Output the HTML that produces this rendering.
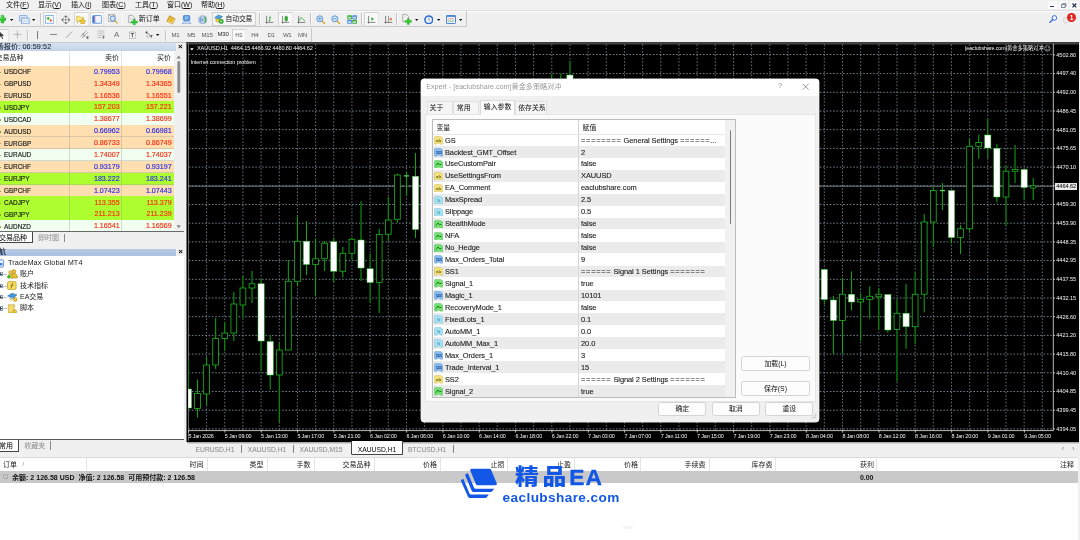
<!DOCTYPE html><html><head><meta charset="utf-8"><title>MT4</title><style>

html,body{margin:0;padding:0;}
body{width:1080px;height:540px;overflow:hidden;background:#f0f0f0;font-family:"Liberation Sans","Noto Sans CJK SC",sans-serif;position:relative;}
#root{position:absolute;left:0;top:0;width:1080px;height:540px;overflow:hidden;background:#f0f0f0;will-change:transform;}
#root div,#root svg{position:absolute;box-sizing:border-box;}
.t{font-family:"Liberation Sans","Noto Sans CJK SC",sans-serif;}
.c{letter-spacing:-0.4px;}
u{text-decoration-thickness:0.5px;text-underline-offset:0.6px;}

</style></head><body><div id="root">
<div style="left:0px;top:0px;width:1080px;height:10.5px;background:#f1f1f1;"></div>
<div class="t" style="top:0.3px;height:9.8px;line-height:9.8px;font-size:7px;color:#111;white-space:nowrap;left:6px;">文件(<u>F</u>)</div>
<div class="t" style="top:0.3px;height:9.8px;line-height:9.8px;font-size:7px;color:#111;white-space:nowrap;left:38px;">显示(<u>V</u>)</div>
<div class="t" style="top:0.3px;height:9.8px;line-height:9.8px;font-size:7px;color:#111;white-space:nowrap;left:71px;">插入(<u>I</u>)</div>
<div class="t" style="top:0.3px;height:9.8px;line-height:9.8px;font-size:7px;color:#111;white-space:nowrap;left:102px;">图表(<u>C</u>)</div>
<div class="t" style="top:0.3px;height:9.8px;line-height:9.8px;font-size:7px;color:#111;white-space:nowrap;left:135px;">工具(<u>T</u>)</div>
<div class="t" style="top:0.3px;height:9.8px;line-height:9.8px;font-size:7px;color:#111;white-space:nowrap;left:167px;">窗口(<u>W</u>)</div>
<div class="t" style="top:0.3px;height:9.8px;line-height:9.8px;font-size:7px;color:#111;white-space:nowrap;left:201px;">帮助(<u>H</u>)</div>
<div style="left:0px;top:10.5px;width:1080px;height:0.8px;background:#fcfcfc;"></div>
<div style="left:0px;top:26.4px;width:466.4px;height:0.8px;background:#c9c9c9;"></div>
<div style="left:466px;top:11.4px;width:0.8px;height:15.6px;background:#c9c9c9;"></div>
<div style="left:0px;top:41.6px;width:311.6px;height:0.8px;background:#c9c9c9;"></div>
<div style="left:311.2px;top:28.4px;width:0.8px;height:13.6px;background:#c9c9c9;"></div>
<svg style="left:-2px;top:15.4px;width:8.2px;height:8.4px" viewBox="0 0 8.2 8.4"><path d="M3.2 0.4 H5.8 V3 H7.8 V5.4 H5.8 V8 H3.2 V5.4 H0 V3 H3.2 Z" fill="#30cc30" stroke="#1a9a1a" stroke-width="0.5"/><path d="M3.8 1 V3.6 H0.4" stroke="#8af08a" stroke-width="0.6" fill="none"/></svg>
<svg style="left:10.0px;top:18.8px;width:3.2px;height:2px" viewBox="0 0 3.2 2"><path d="M0 0 H3.2 L1.6 2 Z" fill="#111"/></svg>
<svg style="left:18.6px;top:14.6px;width:11px;height:9.4px" viewBox="0 0 11 9.4"><rect x="0.5" y="0.5" width="7.6" height="5.6" rx="0.6" fill="#dce8f8" stroke="#6a98d8" stroke-width="0.7"/><rect x="2.4" y="3.2" width="7.8" height="5.6" rx="0.6" fill="#e8f0fb" stroke="#5a8cd2" stroke-width="0.7"/><path d="M1.6 3 L2.8 2 L4 2.8 L5.4 1.8" stroke="#8aa8d8" stroke-width="0.5" fill="none"/><path d="M3.8 7 L5.2 5.8 L6.6 6.6 L8.4 5.4" stroke="#8aa8d8" stroke-width="0.5" fill="none"/></svg>
<svg style="left:31.9px;top:18.8px;width:3.2px;height:2px" viewBox="0 0 3.2 2"><path d="M0 0 H3.2 L1.6 2 Z" fill="#111"/></svg>
<div style="left:39.8px;top:12.6px;width:0.8px;height:12.6px;background:#c4c4c4;"></div><div style="left:40.599999999999994px;top:12.6px;width:0.8px;height:12.6px;background:#fbfbfb;"></div>
<div style="left:42.6px;top:11.8px;width:14.8px;height:14.4px;background:#f9f9f9;border:0.7px solid #d2d2d2;border-right-color:#e6e6e6;border-bottom-color:#ececec;"></div>
<svg style="left:45px;top:15px;width:9.4px;height:9px" viewBox="0 0 9.4 9"><rect x="0.5" y="0.5" width="8.2" height="7.8" fill="#fafcff" stroke="#82b0ea" stroke-width="0.9"/><path d="M1.6 3.4 L3.2 1.8 L4.8 3.4 L3.2 5 Z" fill="#2cb02c"/><path d="M4.2 5.4 L5.8 3.8 L7.4 5.4 L5.8 7 Z" fill="#f07040"/></svg>
<svg style="left:60.8px;top:14.8px;width:9.6px;height:9.6px" viewBox="0 0 9.6 9.6"><path d="M4.8 0.5 L9.1 4.8 L4.8 9.1 L0.5 4.8 Z" fill="#fcfcfc" stroke="#4a4a4a" stroke-width="0.5"/><path d="M4.8 1 V8.6 M1 4.8 H8.6" stroke="#4a4a4a" stroke-width="0.5"/><path d="M3.8 2.2 L4.8 0.8 L5.8 2.2 Z M3.8 7.4 L4.8 8.8 L5.8 7.4 Z M2.2 3.8 L0.8 4.8 L2.2 5.8 Z M7.4 3.8 L8.8 4.8 L7.4 5.8 Z" fill="#3a3a3a"/></svg>
<div style="left:74.4px;top:11.8px;width:15px;height:14.4px;background:#f9f9f9;border:0.7px solid #d2d2d2;border-right-color:#e6e6e6;border-bottom-color:#ececec;"></div>
<svg style="left:76px;top:14.6px;width:10.6px;height:9.6px" viewBox="0 0 10.6 9.6"><path d="M0.5 1.2 H3.2 L4 2.2 H7.4 V6.4 H0.5 Z" fill="#f8e680" stroke="#cca830" stroke-width="0.55"/><path d="M1.6 6.4 V9" stroke="#888" stroke-width="0.5"/><path d="M6.6 3.6 L7.5 5.6 L9.8 5.8 L8.1 7.2 L8.6 9.4 L6.6 8.2 L4.6 9.4 L5.1 7.2 L3.4 5.8 L5.7 5.6 Z" fill="#f8d030" stroke="#b08a10" stroke-width="0.5"/></svg>
<div style="left:90.4px;top:11.8px;width:13.8px;height:14.4px;background:#f9f9f9;border:0.7px solid #d2d2d2;border-right-color:#e6e6e6;border-bottom-color:#ececec;"></div>
<svg style="left:92px;top:15px;width:10.4px;height:9px" viewBox="0 0 10.4 9"><rect x="0.5" y="0.5" width="9.2" height="7.8" rx="0.9" fill="#eef2fd" stroke="#5a96e0" stroke-width="0.9"/><rect x="0.9" y="0.9" width="1.8" height="7" fill="#3a74cc"/><path d="M3.2 1 V8" stroke="#e06060" stroke-width="0.4"/></svg>
<svg style="left:108px;top:14.4px;width:10.6px;height:10.4px" viewBox="0 0 10.6 10.4"><rect x="0.6" y="0.8" width="6.4" height="6.6" fill="#f0f0f0" stroke="#999" stroke-width="0.6"/><path d="M1.6 0.8 V2 M6 0.8 V2" stroke="#666" stroke-width="0.6"/><circle cx="4.8" cy="4.6" r="2.6" fill="#cfe2f8" stroke="#4a7ac0" stroke-width="0.8"/><path d="M6.8 6.6 L9.6 9.4" stroke="#d8a020" stroke-width="1.3"/></svg>
<div style="left:121.6px;top:12.6px;width:0.8px;height:12.6px;background:#c4c4c4;"></div><div style="left:122.39999999999999px;top:12.6px;width:0.8px;height:12.6px;background:#fbfbfb;"></div>
<svg style="left:127.8px;top:14.6px;width:10px;height:10.4px" viewBox="0 0 10 10.4"><path d="M0.8 0.6 H4.6 L6.4 2.4 V7.6 H0.8 Z" fill="#fafafa" stroke="#777" stroke-width="0.6"/><path d="M2 3 H5 M2 4.4 H5" stroke="#aaa" stroke-width="0.5"/><path d="M5.4 4.2 H7.2 V6.2 H9.4 V8 H7.2 V10.2 H5.4 V8 H3.2 V6.2 H5.4 Z" fill="#30cc30" stroke="#1a9a1a" stroke-width="0.45"/></svg>
<div class="t" style="top:13.9px;height:9.8px;line-height:9.8px;font-size:7px;color:#111;white-space:nowrap;left:138.8px;">新订单</div>
<svg style="left:165.6px;top:14.6px;width:10px;height:10px" viewBox="0 0 10 10"><path d="M3.6 0.8 L9.2 4 L6.2 9 L0.8 6.2 Z" fill="#e8b830" stroke="#a87810" stroke-width="0.6"/><path d="M2 6.4 L5.8 8.4 L8.2 4.4" fill="none" stroke="#fae8a0" stroke-width="0.8"/></svg>
<svg style="left:182px;top:14.6px;width:9.6px;height:9.8px" viewBox="0 0 9.6 9.8"><rect x="1.4" y="0.6" width="6.4" height="5" rx="0.8" fill="#5aa0e8" stroke="#2a68b8" stroke-width="0.6"/><path d="M3 2 H6.4 M3 3.4 H5.4" stroke="#e6f0fc" stroke-width="0.6"/><path d="M0.5 9 Q0.5 6.2 4.6 6.2 Q8.8 6.2 8.8 9 Z" fill="#c8dcf4" stroke="#6a90c8" stroke-width="0.6"/></svg>
<svg style="left:197.8px;top:14.8px;width:9.6px;height:9.6px" viewBox="0 0 9.6 9.6"><circle cx="4.8" cy="4.8" r="4.1" fill="#b8d0ec" stroke="#7a9cc8" stroke-width="0.6"/><path d="M2.8 2.4 Q1.4 4.8 2.8 7.2" fill="none" stroke="#4a78c0" stroke-width="0.7"/><circle cx="4.4" cy="4.8" r="0.8" fill="#3a68b0"/><path d="M6 2 Q8 4.8 6 7.6 Q7.6 8.4 8.2 6 Q8.8 3.6 7.4 1.8 Z" fill="#48b048"/></svg>
<div style="left:212.2px;top:11.8px;width:43.4px;height:14.4px;background:#f6f6f6;border:0.7px solid #d0d0d0;"></div>
<svg style="left:214.2px;top:14.4px;width:9.8px;height:10px" viewBox="0 0 9.8 10"><path d="M0.6 3.6 L4.4 1 L8.6 2.6 L5 5.2 Z" fill="#4aa4e0" stroke="#2068a8" stroke-width="0.5"/><path d="M1.8 4.6 V7 Q4 9.2 6.6 7.4 V4.4 L5 5.6 Z" fill="#f0d050" stroke="#a88a18" stroke-width="0.5"/><circle cx="7.2" cy="7.4" r="2.2" fill="#28b828" stroke="#128012" stroke-width="0.4"/><path d="M6.5 6.3 L8.3 7.4 L6.5 8.5 Z" fill="#fff"/></svg>
<div class="t" style="top:14.04px;height:9.52px;line-height:9.52px;font-size:6.8px;color:#111;white-space:nowrap;left:225.6px;letter-spacing:-0.15px;">自动交易</div>
<div style="left:259px;top:12.6px;width:0.8px;height:12.6px;background:#c4c4c4;"></div><div style="left:259.8px;top:12.6px;width:0.8px;height:12.6px;background:#fbfbfb;"></div>
<svg style="left:265.4px;top:14.8px;width:9px;height:9.6px" viewBox="0 0 9 9.6"><path d="M1.6 0.8 V8.6 M0.4 7.4 H8.4" stroke="#555" stroke-width="0.7" fill="none"/><path d="M4.8 1.6 V6.4 M4.8 2.4 H6.2 M3.6 5.4 H4.8" stroke="#28a028" stroke-width="0.8" fill="none"/></svg>
<div style="left:278px;top:11.8px;width:14.6px;height:14.4px;background:#f9f9f9;border:0.7px solid #d2d2d2;border-right-color:#e6e6e6;border-bottom-color:#ececec;"></div>
<svg style="left:281.4px;top:14.6px;width:9px;height:9.8px" viewBox="0 0 9 9.8"><path d="M1.6 0.8 V8.6 M0.4 7.4 H8.4" stroke="#555" stroke-width="0.7" fill="none"/><path d="M5.2 0.6 V7" stroke="#187818" stroke-width="0.6"/><rect x="4" y="1.8" width="2.4" height="3.8" fill="#30c030" stroke="#187818" stroke-width="0.5"/></svg>
<svg style="left:297.4px;top:14.8px;width:9px;height:9.6px" viewBox="0 0 9 9.6"><path d="M1.6 0.8 V8.6 M0.4 7.4 H8.4" stroke="#555" stroke-width="0.7" fill="none"/><path d="M1.6 6.6 L4 2.4 L6 4.2 L8 6" stroke="#38a838" stroke-width="0.8" fill="none"/></svg>
<div style="left:310.2px;top:12.6px;width:0.8px;height:12.6px;background:#c4c4c4;"></div><div style="left:311.0px;top:12.6px;width:0.8px;height:12.6px;background:#fbfbfb;"></div>
<svg style="left:315.6px;top:14.8px;width:10px;height:10px" viewBox="0 0 10 10"><circle cx="3.8" cy="3.8" r="3" fill="#d4e8fa" stroke="#4a8ad0" stroke-width="0.9"/><path d="M6 6 L9 9" stroke="#d8a828" stroke-width="1.4"/><path d="M2.2 3.8 H5.4" stroke="#4a8ad0" stroke-width="0.8"/><path d="M3.8 2.2 V5.4" stroke="#4a8ad0" stroke-width="0.8"/></svg>
<svg style="left:331px;top:14.8px;width:10px;height:10px" viewBox="0 0 10 10"><circle cx="3.8" cy="3.8" r="3" fill="#d4e8fa" stroke="#4a8ad0" stroke-width="0.9"/><path d="M6 6 L9 9" stroke="#d8a828" stroke-width="1.4"/><path d="M2.2 3.8 H5.4" stroke="#4a8ad0" stroke-width="0.8"/></svg>
<svg style="left:346.8px;top:14.8px;width:10.2px;height:9.4px" viewBox="0 0 10.2 9.4"><rect x="0.3" y="0.3" width="4.6" height="4" rx="0.5" fill="#38a838"/><rect x="5.3" y="0.3" width="4.6" height="4" rx="0.5" fill="#4a88d8"/><rect x="0.3" y="4.8" width="4.6" height="4" rx="0.5" fill="#4a88d8"/><rect x="5.3" y="4.8" width="4.6" height="4" rx="0.5" fill="#38a838"/><g fill="#fff" opacity="0.8"><rect x="1.2" y="1.8" width="2.8" height="1.6"/><rect x="6.2" y="1.8" width="2.8" height="1.6"/><rect x="1.2" y="6.3" width="2.8" height="1.6"/><rect x="6.2" y="6.3" width="2.8" height="1.6"/></g></svg>
<div style="left:360.8px;top:12.6px;width:0.8px;height:12.6px;background:#c4c4c4;"></div><div style="left:361.6px;top:12.6px;width:0.8px;height:12.6px;background:#fbfbfb;"></div>
<div style="left:364.4px;top:11.8px;width:14.4px;height:14.4px;background:#f9f9f9;border:0.7px solid #d2d2d2;border-right-color:#e6e6e6;border-bottom-color:#ececec;"></div>
<svg style="left:367.4px;top:14.8px;width:9px;height:9.6px" viewBox="0 0 9 9.6"><path d="M1.6 0.8 V8.6 M0.4 7.4 H8.4" stroke="#555" stroke-width="0.7" fill="none"/><path d="M4.4 2 L7 4 L4.4 6 Z" fill="#30b030"/></svg>
<svg style="left:383.6px;top:14.8px;width:9px;height:9.6px" viewBox="0 0 9 9.6"><path d="M1.6 0.8 V8.6 M0.4 7.4 H8.4" stroke="#555" stroke-width="0.7" fill="none"/><path d="M4.6 1 V7.4" stroke="#555" stroke-width="0.6"/><path d="M7.6 2.6 L5.4 4.2 L7.6 5.8 Z" fill="#e05828"/></svg>
<div style="left:396.4px;top:12.6px;width:0.8px;height:12.6px;background:#c4c4c4;"></div><div style="left:397.2px;top:12.6px;width:0.8px;height:12.6px;background:#fbfbfb;"></div>
<svg style="left:402.4px;top:14.2px;width:10px;height:10.6px" viewBox="0 0 10 10.6"><path d="M0.8 0.6 H4.6 L6.4 2.4 V7.6 H0.8 Z" fill="#fafafa" stroke="#777" stroke-width="0.6"/><path d="M2 3.6 L3.2 2.6 L4.4 3.8" stroke="#999" stroke-width="0.5" fill="none"/><path d="M5.4 4.4 H7.2 V6.4 H9.4 V8.2 H7.2 V10.4 H5.4 V8.2 H3.2 V6.4 H5.4 Z" fill="#30cc30" stroke="#1a9a1a" stroke-width="0.45"/></svg>
<svg style="left:414.6px;top:18.7px;width:3.2px;height:2px" viewBox="0 0 3.2 2"><path d="M0 0 H3.2 L1.6 2 Z" fill="#111"/></svg>
<svg style="left:423.6px;top:14.8px;width:9.6px;height:9.6px" viewBox="0 0 9.6 9.6"><circle cx="4.8" cy="4.8" r="3.9" fill="#e8eef8" stroke="#2a6ad0" stroke-width="1.5"/><path d="M4.8 2.8 V4.8 L6 5.6" stroke="#667" stroke-width="0.6" fill="none"/></svg>
<svg style="left:436.8px;top:18.7px;width:3.2px;height:2px" viewBox="0 0 3.2 2"><path d="M0 0 H3.2 L1.6 2 Z" fill="#111"/></svg>
<svg style="left:446px;top:15px;width:10px;height:9.2px" viewBox="0 0 10 9.2"><rect x="0.5" y="0.5" width="9" height="8" rx="0.6" fill="#eef4fc" stroke="#3c7cd0" stroke-width="0.9"/><path d="M0.5 1.2 H9.5" stroke="#3c7cd0" stroke-width="1.2"/><path d="M1.6 5 L3.6 3.4 L5.4 4.4 L8.2 2.8" stroke="#e06030" stroke-width="0.6" fill="none"/><path d="M1.6 7 L3.6 5.8 L5.4 6.6 L8.2 5.4" stroke="#38a838" stroke-width="0.6" fill="none"/></svg>
<svg style="left:458.8px;top:18.7px;width:3.2px;height:2px" viewBox="0 0 3.2 2"><path d="M0 0 H3.2 L1.6 2 Z" fill="#111"/></svg>
<div style="left:0px;top:28.6px;width:8.8px;height:13px;background:#f8f8f8;border-top:0.7px solid #d0d0d0;border-right:0.7px solid #e2e2e2;"></div>
<svg style="left:-1px;top:30.6px;width:5.4px;height:8.4px" viewBox="0 0 5.4 8.4"><path d="M0.4 0.4 V6.6 L2 5.2 L3.2 8 L4.2 7.6 L3 4.9 L5 4.7 Z" fill="#3a3a3a"/></svg>
<svg style="left:13.4px;top:30.4px;width:8.8px;height:8.8px" viewBox="0 0 8.8 8.8"><path d="M4.4 0.4 V8.4 M0.4 4.4 H8.4" stroke="#9a9a9a" stroke-width="0.65"/></svg>
<div style="left:27px;top:29.6px;width:0.8px;height:11.2px;background:#c4c4c4;"></div><div style="left:27.8px;top:29.6px;width:0.8px;height:11.2px;background:#fbfbfb;"></div>
<div style="left:36.9px;top:31px;width:0.65px;height:7.6px;background:#7c7c7c;"></div>
<div style="left:50px;top:34.35px;width:7px;height:0.65px;background:#868686;"></div>
<svg style="left:65.4px;top:30.6px;width:7.4px;height:7.8px" viewBox="0 0 7.4 7.8"><path d="M0.4 7.4 L7 0.6" stroke="#7c7c7c" stroke-width="0.65"/></svg>
<svg style="left:80.4px;top:30.2px;width:9px;height:9.4px" viewBox="0 0 9 9.4"><path d="M0.6 6.4 L6.4 0.8 M2 8 L7.8 2.4 M2.6 3 L4.8 6.8" stroke="#666" stroke-width="0.6" fill="none"/><text x="6.4" y="9.2" font-size="3.4" font-weight="bold" fill="#333" font-family="Liberation Sans,sans-serif">E</text></svg>
<svg style="left:97px;top:30.4px;width:8.4px;height:9px" viewBox="0 0 8.4 9"><path d="M0.4 1 H7.6 M0.4 3.2 H7.6 M0.4 5.4 H7.6 M0.4 7.6 H5.4" stroke="#9a9a9a" stroke-width="0.55"/><text x="5.8" y="9" font-size="3" font-weight="bold" fill="#333" font-family="Liberation Sans,sans-serif">F</text></svg>
<div class="t" style="top:30.24px;height:10.92px;line-height:10.92px;font-size:7.8px;color:#6a6a6a;white-space:nowrap;left:111.6px;width:10px;text-align:center;">A</div>
<svg style="left:129.2px;top:30.6px;width:6.8px;height:8.2px" viewBox="0 0 6.8 8.2"><rect x="0.5" y="1" width="5.8" height="6.6" fill="#f8f8f8" stroke="#777" stroke-width="0.6" stroke-dasharray="1 0.5"/><path d="M1.8 2.6 H5 M3.4 2.6 V6.4" stroke="#333" stroke-width="0.8"/></svg>
<svg style="left:145px;top:31px;width:7.8px;height:7.6px" viewBox="0 0 7.8 7.6"><path d="M0.6 1.4 L2 0.4 L2 2.4 Z M2 1.4 L5.4 4.8 M4 4.4 L6.6 7 M6 4.6 L7.2 4.2 L6.4 6 Z" fill="#444" stroke="#444" stroke-width="0.6"/><path d="M1.2 4.6 L3.4 6.8" stroke="#444" stroke-width="0.6"/></svg>
<svg style="left:156.3px;top:33.9px;width:3.2px;height:2px" viewBox="0 0 3.2 2"><path d="M0 0 H3.2 L1.6 2 Z" fill="#111"/></svg>
<div style="left:165.2px;top:29.6px;width:0.8px;height:11.2px;background:#c4c4c4;"></div><div style="left:166.0px;top:29.6px;width:0.8px;height:11.2px;background:#fbfbfb;"></div>
<div class="t" style="top:30.53px;height:8.54px;line-height:8.54px;font-size:6.1px;color:#5a5a5a;white-space:nowrap;left:165.4px;width:20px;text-align:center;letter-spacing:-0.3px;">M1</div>
<div class="t" style="top:30.53px;height:8.54px;line-height:8.54px;font-size:6.1px;color:#5a5a5a;white-space:nowrap;left:181.2px;width:20px;text-align:center;letter-spacing:-0.3px;">M5</div>
<div class="t" style="top:30.53px;height:8.54px;line-height:8.54px;font-size:6.1px;color:#5a5a5a;white-space:nowrap;left:197.0px;width:20px;text-align:center;letter-spacing:-0.3px;">M15</div>
<div style="left:216.2px;top:28.4px;width:14.4px;height:12.8px;background:#f6f6f6;border:0.5px solid #ebebeb;"></div>
<div class="t" style="top:29.93px;height:8.54px;line-height:8.54px;font-size:6.1px;color:#2a2a2a;white-space:nowrap;left:213.0px;width:20px;text-align:center;letter-spacing:-0.3px;">M30</div>
<div style="left:232.4px;top:28.6px;width:13.4px;height:12.6px;background:#f9f9f9;border:0.6px solid #ececec;border-top-color:#d4d4d4;border-left-color:#d0d0d0;"></div>
<div class="t" style="top:30.53px;height:8.54px;line-height:8.54px;font-size:6.1px;color:#5a5a5a;white-space:nowrap;left:228.8px;width:20px;text-align:center;letter-spacing:-0.3px;">H1</div>
<div class="t" style="top:30.53px;height:8.54px;line-height:8.54px;font-size:6.1px;color:#5a5a5a;white-space:nowrap;left:244.8px;width:20px;text-align:center;letter-spacing:-0.3px;">H4</div>
<div class="t" style="top:30.53px;height:8.54px;line-height:8.54px;font-size:6.1px;color:#5a5a5a;white-space:nowrap;left:261.0px;width:20px;text-align:center;letter-spacing:-0.3px;">D1</div>
<div class="t" style="top:30.53px;height:8.54px;line-height:8.54px;font-size:6.1px;color:#5a5a5a;white-space:nowrap;left:277.2px;width:20px;text-align:center;letter-spacing:-0.3px;">W1</div>
<div class="t" style="top:30.53px;height:8.54px;line-height:8.54px;font-size:6.1px;color:#5a5a5a;white-space:nowrap;left:292.5px;width:20px;text-align:center;letter-spacing:-0.3px;">MN</div>
<div style="left:1048px;top:1px;width:9px;height:8.2px;background:#fbfbfb;"></div>
<div style="left:1059px;top:1px;width:9px;height:8.2px;background:#fbfbfb;"></div>
<div style="left:1070px;top:1px;width:9px;height:8.2px;background:#fbfbfb;"></div>
<div style="left:1050.4px;top:6px;width:3.4px;height:1.0px;background:#2c3a54;"></div>
<svg style="left:1061px;top:3px;width:5.6px;height:5px" viewBox="0 0 5.6 5"><path d="M1.6 1.6 V0.5 H5.1 V3.2 H4" stroke="#4c5a74" stroke-width="0.6" fill="none"/><rect x="0.5" y="1.7" width="3.6" height="2.8" stroke="#4c5a74" stroke-width="0.7" fill="none"/></svg>
<svg style="left:1072.2px;top:3px;width:4.8px;height:4.8px" viewBox="0 0 4.8 4.8"><path d="M0.5 0.5 L4.3 4.3 M4.3 0.5 L0.5 4.3" stroke="#1c2a44" stroke-width="1.1"/></svg>
<div style="left:0px;top:10.2px;width:1080px;height:1.2px;background:#dedede;"></div>
<svg style="left:1049px;top:14.8px;width:8.4px;height:8px" viewBox="0 0 8.4 8"><circle cx="5.4" cy="2.9" r="2.3" fill="#f4f8ff" stroke="#2a5ed0" stroke-width="0.9"/><path d="M3.8 4.6 L0.8 7.4" stroke="#2a5ed0" stroke-width="1.3" stroke-linecap="round"/></svg>
<svg style="left:1063px;top:17px;width:8px;height:8px" viewBox="0 0 8 8"><path d="M0.6 1.4 Q0.6 0.6 1.6 0.6 H6 Q7 0.6 7 1.4 V4.4 Q7 5.2 6 5.2 H3.4 L1.8 6.8 V5.2 Q0.6 5.2 0.6 4.4 Z" fill="#ececec" stroke="#c4c4c4" stroke-width="0.5"/></svg>
<div style="left:1067px;top:13.2px;width:9.2px;height:9.2px;background:#e0261c;border-radius:50%;"></div>
<div class="t" style="top:13.28px;height:9.24px;line-height:9.24px;font-size:6.6px;color:#fff;white-space:nowrap;left:1067.6px;width:8px;text-align:center;font-weight:bold;">1</div>

<div style="left:0px;top:42.8px;width:183.5px;height:201px;background:#f0f0f0;"></div>
<div style="left:0px;top:43.2px;width:176px;height:8px;background:linear-gradient(#d6e2f1,#c3d3e8);"></div>
<div class="t" style="top:42.26px;height:10.08px;line-height:10.08px;font-size:7.2px;color:#18243c;white-space:nowrap;left:-3.6px;letter-spacing:0.1px;-webkit-text-stroke:0.1px #18243c;">场报价: 06:59:52</div>
<div class="t" style="top:41.2px;height:11.2px;line-height:11.2px;font-size:8px;color:#000;white-space:nowrap;left:175.4px;width:10px;text-align:center;font-weight:bold;">×</div>
<div style="left:0px;top:51px;width:174px;height:14.5px;background:#ffffff;"></div>
<div style="left:174px;top:51px;width:9.5px;height:181px;background:#f0f0f0;"></div>
<div class="t" style="top:53.4px;height:9.8px;line-height:9.8px;font-size:7px;color:#222;white-space:nowrap;left:-4.5px;">交易品种</div>
<div class="t" style="top:53.4px;height:9.8px;line-height:9.8px;font-size:7px;color:#222;white-space:nowrap;right:961.1px;text-align:right;">卖价</div>
<div class="t" style="top:53.4px;height:9.8px;line-height:9.8px;font-size:7px;color:#222;white-space:nowrap;right:909.1px;text-align:right;">买价</div>
<div style="left:69.3px;top:51px;width:0.8px;height:14.5px;background:#e2e2e2;"></div>
<div style="left:121.3px;top:51px;width:0.8px;height:14.5px;background:#e2e2e2;"></div>
<div style="left:0px;top:65.6px;width:174px;height:11.99px;background:#ffdfb0;"></div>
<div style="left:0px;top:76.99px;width:174px;height:0.6px;background:rgba(150,150,150,0.35);"></div>
<div style="left:69.3px;top:65.6px;width:0.7px;height:11.89px;background:rgba(150,150,150,0.35);"></div>
<div style="left:121.3px;top:65.6px;width:0.7px;height:11.89px;background:rgba(150,150,150,0.35);"></div>
<div style="left:0px;top:71.79px;width:1.1px;height:1.3px;background:#3a9a3a;border-radius:1px;"></div>
<div class="t" style="top:67.18px;height:10.22px;line-height:10.22px;font-size:7.3px;color:#1c1c1c;white-space:nowrap;left:3.9px;transform:scaleX(0.885);transform-origin:0 50%;-webkit-text-stroke:0.18px #1c1c1c;">USDCHF</div>
<div class="t" style="top:67.72px;height:9.94px;line-height:9.94px;font-size:7.1px;color:#2a2ae8;white-space:nowrap;right:960.4px;text-align:right;-webkit-text-stroke:0.15px #2a2ae8;">0.79953</div>
<div class="t" style="top:67.72px;height:9.94px;line-height:9.94px;font-size:7.1px;color:#2a2ae8;white-space:nowrap;right:908.4px;text-align:right;-webkit-text-stroke:0.15px #2a2ae8;">0.79968</div>
<div style="left:0px;top:77.49px;width:174px;height:11.99px;background:#ffdfb0;"></div>
<div style="left:0px;top:88.88px;width:174px;height:0.6px;background:rgba(150,150,150,0.35);"></div>
<div style="left:69.3px;top:77.49px;width:0.7px;height:11.89px;background:rgba(150,150,150,0.35);"></div>
<div style="left:121.3px;top:77.49px;width:0.7px;height:11.89px;background:rgba(150,150,150,0.35);"></div>
<div style="left:0px;top:83.69px;width:1.1px;height:1.3px;background:#b08a20;border-radius:1px;"></div>
<div class="t" style="top:79.08px;height:10.22px;line-height:10.22px;font-size:7.3px;color:#1c1c1c;white-space:nowrap;left:3.9px;transform:scaleX(0.885);transform-origin:0 50%;-webkit-text-stroke:0.18px #1c1c1c;">GBPUSD</div>
<div class="t" style="top:79.62px;height:9.94px;line-height:9.94px;font-size:7.1px;color:#ff2a10;white-space:nowrap;right:960.4px;text-align:right;-webkit-text-stroke:0.15px #ff2a10;">1.34349</div>
<div class="t" style="top:79.62px;height:9.94px;line-height:9.94px;font-size:7.1px;color:#ff2a10;white-space:nowrap;right:908.4px;text-align:right;-webkit-text-stroke:0.15px #ff2a10;">1.34365</div>
<div style="left:0px;top:89.38px;width:174px;height:11.99px;background:#ffdfb0;"></div>
<div style="left:0px;top:100.77px;width:174px;height:0.6px;background:rgba(150,150,150,0.35);"></div>
<div style="left:69.3px;top:89.38px;width:0.7px;height:11.89px;background:rgba(150,150,150,0.35);"></div>
<div style="left:121.3px;top:89.38px;width:0.7px;height:11.89px;background:rgba(150,150,150,0.35);"></div>
<div style="left:0px;top:95.57px;width:1.1px;height:1.3px;background:#b08a20;border-radius:1px;"></div>
<div class="t" style="top:90.96px;height:10.22px;line-height:10.22px;font-size:7.3px;color:#1c1c1c;white-space:nowrap;left:3.9px;transform:scaleX(0.885);transform-origin:0 50%;-webkit-text-stroke:0.18px #1c1c1c;">EURUSD</div>
<div class="t" style="top:91.5px;height:9.94px;line-height:9.94px;font-size:7.1px;color:#ff2a10;white-space:nowrap;right:960.4px;text-align:right;-webkit-text-stroke:0.15px #ff2a10;">1.16536</div>
<div class="t" style="top:91.5px;height:9.94px;line-height:9.94px;font-size:7.1px;color:#ff2a10;white-space:nowrap;right:908.4px;text-align:right;-webkit-text-stroke:0.15px #ff2a10;">1.16551</div>
<div style="left:0px;top:101.27px;width:174px;height:11.99px;background:#adff2f;"></div>
<div style="left:0px;top:112.66px;width:174px;height:0.6px;background:rgba(150,150,150,0.35);"></div>
<div style="left:69.3px;top:101.27px;width:0.7px;height:11.89px;background:rgba(150,150,150,0.35);"></div>
<div style="left:121.3px;top:101.27px;width:0.7px;height:11.89px;background:rgba(150,150,150,0.35);"></div>
<div style="left:0px;top:107.47px;width:1.1px;height:1.3px;background:#b08a20;border-radius:1px;"></div>
<div class="t" style="top:102.86px;height:10.22px;line-height:10.22px;font-size:7.3px;color:#1c1c1c;white-space:nowrap;left:3.9px;transform:scaleX(0.885);transform-origin:0 50%;-webkit-text-stroke:0.18px #1c1c1c;">USDJPY</div>
<div class="t" style="top:103.4px;height:9.94px;line-height:9.94px;font-size:7.1px;color:#ff2a10;white-space:nowrap;right:960.4px;text-align:right;-webkit-text-stroke:0.15px #ff2a10;">157.203</div>
<div class="t" style="top:103.4px;height:9.94px;line-height:9.94px;font-size:7.1px;color:#ff2a10;white-space:nowrap;right:908.4px;text-align:right;-webkit-text-stroke:0.15px #ff2a10;">157.221</div>
<div style="left:0px;top:113.16px;width:174px;height:11.99px;background:#f0fff0;"></div>
<div style="left:0px;top:124.55px;width:174px;height:0.6px;background:rgba(150,150,150,0.35);"></div>
<div style="left:69.3px;top:113.16px;width:0.7px;height:11.89px;background:rgba(150,150,150,0.35);"></div>
<div style="left:121.3px;top:113.16px;width:0.7px;height:11.89px;background:rgba(150,150,150,0.35);"></div>
<div style="left:0px;top:119.35px;width:1.1px;height:1.3px;background:#b08a20;border-radius:1px;"></div>
<div class="t" style="top:114.74px;height:10.22px;line-height:10.22px;font-size:7.3px;color:#1c1c1c;white-space:nowrap;left:3.9px;transform:scaleX(0.885);transform-origin:0 50%;-webkit-text-stroke:0.18px #1c1c1c;">USDCAD</div>
<div class="t" style="top:115.28px;height:9.94px;line-height:9.94px;font-size:7.1px;color:#ff2a10;white-space:nowrap;right:960.4px;text-align:right;-webkit-text-stroke:0.15px #ff2a10;">1.38677</div>
<div class="t" style="top:115.28px;height:9.94px;line-height:9.94px;font-size:7.1px;color:#ff2a10;white-space:nowrap;right:908.4px;text-align:right;-webkit-text-stroke:0.15px #ff2a10;">1.38699</div>
<div style="left:0px;top:125.05px;width:174px;height:11.99px;background:#ffdfb0;"></div>
<div style="left:0px;top:136.44px;width:174px;height:0.6px;background:rgba(150,150,150,0.35);"></div>
<div style="left:69.3px;top:125.05px;width:0.7px;height:11.89px;background:rgba(150,150,150,0.35);"></div>
<div style="left:121.3px;top:125.05px;width:0.7px;height:11.89px;background:rgba(150,150,150,0.35);"></div>
<div style="left:0px;top:131.25px;width:1.1px;height:1.3px;background:#3a9a3a;border-radius:1px;"></div>
<div class="t" style="top:126.64px;height:10.22px;line-height:10.22px;font-size:7.3px;color:#1c1c1c;white-space:nowrap;left:3.9px;transform:scaleX(0.885);transform-origin:0 50%;-webkit-text-stroke:0.18px #1c1c1c;">AUDUSD</div>
<div class="t" style="top:127.18px;height:9.94px;line-height:9.94px;font-size:7.1px;color:#2a2ae8;white-space:nowrap;right:960.4px;text-align:right;-webkit-text-stroke:0.15px #2a2ae8;">0.66962</div>
<div class="t" style="top:127.18px;height:9.94px;line-height:9.94px;font-size:7.1px;color:#2a2ae8;white-space:nowrap;right:908.4px;text-align:right;-webkit-text-stroke:0.15px #2a2ae8;">0.66981</div>
<div style="left:0px;top:136.94px;width:174px;height:11.99px;background:#ffdfb0;"></div>
<div style="left:0px;top:148.33px;width:174px;height:0.6px;background:rgba(150,150,150,0.35);"></div>
<div style="left:69.3px;top:136.94px;width:0.7px;height:11.89px;background:rgba(150,150,150,0.35);"></div>
<div style="left:121.3px;top:136.94px;width:0.7px;height:11.89px;background:rgba(150,150,150,0.35);"></div>
<div style="left:0px;top:143.13px;width:1.1px;height:1.3px;background:#b08a20;border-radius:1px;"></div>
<div class="t" style="top:138.52px;height:10.22px;line-height:10.22px;font-size:7.3px;color:#1c1c1c;white-space:nowrap;left:3.9px;transform:scaleX(0.885);transform-origin:0 50%;-webkit-text-stroke:0.18px #1c1c1c;">EURGBP</div>
<div class="t" style="top:139.06px;height:9.94px;line-height:9.94px;font-size:7.1px;color:#ff2a10;white-space:nowrap;right:960.4px;text-align:right;-webkit-text-stroke:0.15px #ff2a10;">0.86733</div>
<div class="t" style="top:139.06px;height:9.94px;line-height:9.94px;font-size:7.1px;color:#ff2a10;white-space:nowrap;right:908.4px;text-align:right;-webkit-text-stroke:0.15px #ff2a10;">0.86749</div>
<div style="left:0px;top:148.83px;width:174px;height:11.99px;background:#f0fff0;"></div>
<div style="left:0px;top:160.22px;width:174px;height:0.6px;background:rgba(150,150,150,0.35);"></div>
<div style="left:69.3px;top:148.83px;width:0.7px;height:11.89px;background:rgba(150,150,150,0.35);"></div>
<div style="left:121.3px;top:148.83px;width:0.7px;height:11.89px;background:rgba(150,150,150,0.35);"></div>
<div style="left:0px;top:155.03px;width:1.1px;height:1.3px;background:#b08a20;border-radius:1px;"></div>
<div class="t" style="top:150.42px;height:10.22px;line-height:10.22px;font-size:7.3px;color:#1c1c1c;white-space:nowrap;left:3.9px;transform:scaleX(0.885);transform-origin:0 50%;-webkit-text-stroke:0.18px #1c1c1c;">EURAUD</div>
<div class="t" style="top:150.96px;height:9.94px;line-height:9.94px;font-size:7.1px;color:#ff2a10;white-space:nowrap;right:960.4px;text-align:right;-webkit-text-stroke:0.15px #ff2a10;">1.74007</div>
<div class="t" style="top:150.96px;height:9.94px;line-height:9.94px;font-size:7.1px;color:#ff2a10;white-space:nowrap;right:908.4px;text-align:right;-webkit-text-stroke:0.15px #ff2a10;">1.74037</div>
<div style="left:0px;top:160.72px;width:174px;height:11.99px;background:#ffdfb0;"></div>
<div style="left:0px;top:172.11px;width:174px;height:0.6px;background:rgba(150,150,150,0.35);"></div>
<div style="left:69.3px;top:160.72px;width:0.7px;height:11.89px;background:rgba(150,150,150,0.35);"></div>
<div style="left:121.3px;top:160.72px;width:0.7px;height:11.89px;background:rgba(150,150,150,0.35);"></div>
<div style="left:0px;top:166.91px;width:1.1px;height:1.3px;background:#3a9a3a;border-radius:1px;"></div>
<div class="t" style="top:162.3px;height:10.22px;line-height:10.22px;font-size:7.3px;color:#1c1c1c;white-space:nowrap;left:3.9px;transform:scaleX(0.885);transform-origin:0 50%;-webkit-text-stroke:0.18px #1c1c1c;">EURCHF</div>
<div class="t" style="top:162.84px;height:9.94px;line-height:9.94px;font-size:7.1px;color:#2a2ae8;white-space:nowrap;right:960.4px;text-align:right;-webkit-text-stroke:0.15px #2a2ae8;">0.93179</div>
<div class="t" style="top:162.84px;height:9.94px;line-height:9.94px;font-size:7.1px;color:#2a2ae8;white-space:nowrap;right:908.4px;text-align:right;-webkit-text-stroke:0.15px #2a2ae8;">0.93197</div>
<div style="left:0px;top:172.61px;width:174px;height:11.99px;background:#adff2f;"></div>
<div style="left:0px;top:184.0px;width:174px;height:0.6px;background:rgba(150,150,150,0.35);"></div>
<div style="left:69.3px;top:172.61px;width:0.7px;height:11.89px;background:rgba(150,150,150,0.35);"></div>
<div style="left:121.3px;top:172.61px;width:0.7px;height:11.89px;background:rgba(150,150,150,0.35);"></div>
<div style="left:0px;top:178.81px;width:1.1px;height:1.3px;background:#3a9a3a;border-radius:1px;"></div>
<div class="t" style="top:174.2px;height:10.22px;line-height:10.22px;font-size:7.3px;color:#1c1c1c;white-space:nowrap;left:3.9px;transform:scaleX(0.885);transform-origin:0 50%;-webkit-text-stroke:0.18px #1c1c1c;">EURJPY</div>
<div class="t" style="top:174.74px;height:9.94px;line-height:9.94px;font-size:7.1px;color:#2a2ae8;white-space:nowrap;right:960.4px;text-align:right;-webkit-text-stroke:0.15px #2a2ae8;">183.222</div>
<div class="t" style="top:174.74px;height:9.94px;line-height:9.94px;font-size:7.1px;color:#2a2ae8;white-space:nowrap;right:908.4px;text-align:right;-webkit-text-stroke:0.15px #2a2ae8;">183.241</div>
<div style="left:0px;top:184.5px;width:174px;height:11.99px;background:#ffdfb0;"></div>
<div style="left:0px;top:195.89px;width:174px;height:0.6px;background:rgba(150,150,150,0.35);"></div>
<div style="left:69.3px;top:184.5px;width:0.7px;height:11.89px;background:rgba(150,150,150,0.35);"></div>
<div style="left:121.3px;top:184.5px;width:0.7px;height:11.89px;background:rgba(150,150,150,0.35);"></div>
<div style="left:0px;top:190.69px;width:1.1px;height:1.3px;background:#3a9a3a;border-radius:1px;"></div>
<div class="t" style="top:186.08px;height:10.22px;line-height:10.22px;font-size:7.3px;color:#1c1c1c;white-space:nowrap;left:3.9px;transform:scaleX(0.885);transform-origin:0 50%;-webkit-text-stroke:0.18px #1c1c1c;">GBPCHF</div>
<div class="t" style="top:186.62px;height:9.94px;line-height:9.94px;font-size:7.1px;color:#2a2ae8;white-space:nowrap;right:960.4px;text-align:right;-webkit-text-stroke:0.15px #2a2ae8;">1.07423</div>
<div class="t" style="top:186.62px;height:9.94px;line-height:9.94px;font-size:7.1px;color:#2a2ae8;white-space:nowrap;right:908.4px;text-align:right;-webkit-text-stroke:0.15px #2a2ae8;">1.07443</div>
<div style="left:0px;top:196.39px;width:174px;height:11.99px;background:#adff2f;"></div>
<div style="left:0px;top:207.78px;width:174px;height:0.6px;background:rgba(150,150,150,0.35);"></div>
<div style="left:69.3px;top:196.39px;width:0.7px;height:11.89px;background:rgba(150,150,150,0.35);"></div>
<div style="left:121.3px;top:196.39px;width:0.7px;height:11.89px;background:rgba(150,150,150,0.35);"></div>
<div style="left:0px;top:202.58px;width:1.1px;height:1.3px;background:#b08a20;border-radius:1px;"></div>
<div class="t" style="top:197.97px;height:10.22px;line-height:10.22px;font-size:7.3px;color:#1c1c1c;white-space:nowrap;left:3.9px;transform:scaleX(0.885);transform-origin:0 50%;-webkit-text-stroke:0.18px #1c1c1c;">CADJPY</div>
<div class="t" style="top:198.51px;height:9.94px;line-height:9.94px;font-size:7.1px;color:#ff2a10;white-space:nowrap;right:960.4px;text-align:right;-webkit-text-stroke:0.15px #ff2a10;">113.355</div>
<div class="t" style="top:198.51px;height:9.94px;line-height:9.94px;font-size:7.1px;color:#ff2a10;white-space:nowrap;right:908.4px;text-align:right;-webkit-text-stroke:0.15px #ff2a10;">113.379</div>
<div style="left:0px;top:208.28px;width:174px;height:11.99px;background:#adff2f;"></div>
<div style="left:0px;top:219.67px;width:174px;height:0.6px;background:rgba(150,150,150,0.35);"></div>
<div style="left:69.3px;top:208.28px;width:0.7px;height:11.89px;background:rgba(150,150,150,0.35);"></div>
<div style="left:121.3px;top:208.28px;width:0.7px;height:11.89px;background:rgba(150,150,150,0.35);"></div>
<div style="left:0px;top:214.47px;width:1.1px;height:1.3px;background:#b08a20;border-radius:1px;"></div>
<div class="t" style="top:209.86px;height:10.22px;line-height:10.22px;font-size:7.3px;color:#1c1c1c;white-space:nowrap;left:3.9px;transform:scaleX(0.885);transform-origin:0 50%;-webkit-text-stroke:0.18px #1c1c1c;">GBPJPY</div>
<div class="t" style="top:210.4px;height:9.94px;line-height:9.94px;font-size:7.1px;color:#ff2a10;white-space:nowrap;right:960.4px;text-align:right;-webkit-text-stroke:0.15px #ff2a10;">211.213</div>
<div class="t" style="top:210.4px;height:9.94px;line-height:9.94px;font-size:7.1px;color:#ff2a10;white-space:nowrap;right:908.4px;text-align:right;-webkit-text-stroke:0.15px #ff2a10;">211.239</div>
<div style="left:0px;top:220.17px;width:174px;height:11.99px;background:#f0fff0;"></div>
<div style="left:0px;top:231.56px;width:174px;height:0.6px;background:rgba(150,150,150,0.35);"></div>
<div style="left:69.3px;top:220.17px;width:0.7px;height:11.89px;background:rgba(150,150,150,0.35);"></div>
<div style="left:121.3px;top:220.17px;width:0.7px;height:11.89px;background:rgba(150,150,150,0.35);"></div>
<div style="left:0px;top:226.36px;width:1.1px;height:1.3px;background:#b08a20;border-radius:1px;"></div>
<div class="t" style="top:221.75px;height:10.22px;line-height:10.22px;font-size:7.3px;color:#1c1c1c;white-space:nowrap;left:3.9px;transform:scaleX(0.885);transform-origin:0 50%;-webkit-text-stroke:0.18px #1c1c1c;">AUDNZD</div>
<div class="t" style="top:222.29px;height:9.94px;line-height:9.94px;font-size:7.1px;color:#ff2a10;white-space:nowrap;right:960.4px;text-align:right;-webkit-text-stroke:0.15px #ff2a10;">1.16541</div>
<div class="t" style="top:222.29px;height:9.94px;line-height:9.94px;font-size:7.1px;color:#ff2a10;white-space:nowrap;right:908.4px;text-align:right;-webkit-text-stroke:0.15px #ff2a10;">1.16569</div>
<svg style="left:174px;top:51px;width:10px;height:181px" viewBox="0 0 10 181"><path d="M2.4 7.4 L4.7 4.4 L7 7.4 Z" fill="#868686"/><rect x="3.4" y="10" width="2.8" height="32" rx="1.4" fill="#8a8a8a"/><path d="M2.4 174.2 L4.7 177.2 L7 174.2 Z" fill="#868686"/></svg>
<div style="left:0px;top:231.0px;width:183.5px;height:12.6px;background:#f0f0f0;"></div>
<div style="left:0px;top:231.0px;width:183.5px;height:0.9px;background:#6a6a6a;"></div>
<div style="left:0px;top:231.9px;width:32.6px;height:11.6px;background:#ffffff;border-right:0.9px solid #444;border-bottom:0.9px solid #444;"></div>
<div class="t" style="top:232.7px;height:9.8px;line-height:9.8px;font-size:7px;color:#000;white-space:nowrap;left:-1px;">交易品种</div>
<div class="t" style="top:232.6px;height:9.8px;line-height:9.8px;font-size:7px;color:#8a8a8a;white-space:nowrap;left:38px;">即时图</div>
<div style="left:63.6px;top:233.5px;width:0.8px;height:8.5px;background:#8a8a8a;"></div>
<div style="left:0px;top:247.8px;width:183.5px;height:203px;background:#ffffff;"></div>
<div style="left:0px;top:247.8px;width:183.5px;height:8px;background:#f0f0f0;"></div>
<div style="left:0px;top:248.6px;width:175.8px;height:7.2px;background:linear-gradient(#b7cbe5,#a9c0df);"></div>
<div class="t" style="top:247.1px;height:9.8px;line-height:9.8px;font-size:7px;color:#18243c;white-space:nowrap;left:-1px;-webkit-text-stroke:0.15px #18243c;">航</div>
<div class="t" style="top:246.2px;height:11.2px;line-height:11.2px;font-size:8px;color:#000;white-space:nowrap;left:175.5px;width:10px;text-align:center;font-weight:bold;">×</div>
<div class="t" style="top:257.89px;height:10.22px;line-height:10.22px;font-size:7.3px;color:#222;white-space:nowrap;left:8px;letter-spacing:0.12px;">TradeMax Global MT4</div>
<svg style="left:0px;top:258.5px;width:5px;height:9px" viewBox="0 0 5 9"><rect x="-2" y="0.8" width="5.6" height="7.4" rx="1" fill="#eaf2fc" stroke="#4a7fd0" stroke-width="0.8"/><rect x="0" y="4" width="2.5" height="2.5" fill="#4a7fd0"/></svg>
<div class="t" style="top:268.9px;height:9.8px;line-height:9.8px;font-size:7px;color:#222;white-space:nowrap;left:20px;">账户</div>
<div style="left:-1.5px;top:271.8px;width:4px;height:4.4px;background:#fff;border:0.7px solid #8a9ab0;"></div>
<div style="left:-0.6px;top:273.8px;width:2.3px;height:0.5px;background:#445;"></div>
<div style="left:0.3px;top:272.8px;width:0.5px;height:2.4px;background:#445;"></div>
<div style="left:3px;top:273.8px;width:4px;height:0.5px;background:#c4c4c4;"></div>
<svg style="left:6.5px;top:268.8px;width:11px;height:10px" viewBox="0 0 11 10"><circle cx="6.8" cy="2.6" r="2" fill="#e8c030" stroke="#a07810" stroke-width="0.5"/><path d="M3.2 9 Q3.2 4.6 6.8 4.6 Q10.4 4.6 10.4 9 Z" fill="#e8c030" stroke="#a07810" stroke-width="0.5"/><circle cx="3.3" cy="3.4" r="1.7" fill="#f0d050" stroke="#a07810" stroke-width="0.5"/><path d="M0.6 9 Q0.6 5.3 3.3 5.3 Q6 5.3 6 9 Z" fill="#f0d050" stroke="#a07810" stroke-width="0.5"/><circle cx="2" cy="7.6" r="1.6" fill="#20c020"/></svg>
<div class="t" style="top:280.6px;height:9.8px;line-height:9.8px;font-size:7px;color:#222;white-space:nowrap;left:20px;">技术指标</div>
<div style="left:-1.5px;top:283.5px;width:4px;height:4.4px;background:#fff;border:0.7px solid #8a9ab0;"></div>
<div style="left:-0.6px;top:285.5px;width:2.3px;height:0.5px;background:#445;"></div>
<div style="left:0.3px;top:284.5px;width:0.5px;height:2.4px;background:#445;"></div>
<div style="left:3px;top:285.5px;width:4px;height:0.5px;background:#c4c4c4;"></div>
<svg style="left:7px;top:280.9px;width:10px;height:9.4px" viewBox="0 0 10 9.4"><rect x="0.5" y="0.5" width="8.6" height="8.2" rx="1.6" fill="#f4dc60" stroke="#b89820" stroke-width="0.7"/><path d="M3.4 7.2 Q4.6 7.2 4.8 4.6 Q5 2 6.4 2.2" fill="none" stroke="#7a5a10" stroke-width="0.8"/><path d="M3.6 4.6 H6.2" stroke="#7a5a10" stroke-width="0.6"/></svg>
<div class="t" style="top:291.9px;height:9.8px;line-height:9.8px;font-size:7px;color:#222;white-space:nowrap;left:20px;">EA交易</div>
<div style="left:-1.5px;top:294.8px;width:4px;height:4.4px;background:#fff;border:0.7px solid #8a9ab0;"></div>
<div style="left:-0.6px;top:296.8px;width:2.3px;height:0.5px;background:#445;"></div>
<div style="left:0.3px;top:295.8px;width:0.5px;height:2.4px;background:#445;"></div>
<div style="left:3px;top:296.8px;width:4px;height:0.5px;background:#c4c4c4;"></div>
<svg style="left:6.5px;top:291.8px;width:11.5px;height:10px" viewBox="0 0 11.5 10"><path d="M0.6 4 L5 1.2 L10 3 L5.6 5.8 Z" fill="#3c9ad8" stroke="#1c5a98" stroke-width="0.5"/><path d="M2.6 5.2 Q5.2 8 8.4 5" fill="#78c0f0" stroke="#1c5a98" stroke-width="0.5"/><circle cx="8.2" cy="7.4" r="1.9" fill="#f0c830" stroke="#a07810" stroke-width="0.5"/><path d="M2.4 6.6 L5 8.6" stroke="#e0b020" stroke-width="1"/></svg>
<div class="t" style="top:303.4px;height:9.8px;line-height:9.8px;font-size:7px;color:#222;white-space:nowrap;left:20px;">脚本</div>
<div style="left:-1.5px;top:306.3px;width:4px;height:4.4px;background:#fff;border:0.7px solid #8a9ab0;"></div>
<div style="left:-0.6px;top:308.3px;width:2.3px;height:0.5px;background:#445;"></div>
<div style="left:0.3px;top:307.3px;width:0.5px;height:2.4px;background:#445;"></div>
<div style="left:3px;top:308.3px;width:4px;height:0.5px;background:#c4c4c4;"></div>
<svg style="left:7px;top:303.5px;width:10.5px;height:9.8px" viewBox="0 0 10.5 9.8"><path d="M1 0.8 H7.6 V3 Q6 4.6 7.6 6.4 V8.4 H1 Q2.4 6.6 1 4.6 Q2.4 2.8 1 0.8 Z" fill="#f4dc70" stroke="#b89820" stroke-width="0.6"/><circle cx="7.8" cy="7.6" r="1.8" fill="#f0c830" stroke="#a07810" stroke-width="0.5"/></svg>
<div style="left:0px;top:438.7px;width:183.5px;height:0.9px;background:#5a5a5a;"></div>
<div style="left:0px;top:439.6px;width:183.5px;height:13px;background:#f0f0f0;"></div>
<div style="left:0px;top:439.5px;width:18.8px;height:12.2px;background:#ffffff;border-right:0.9px solid #444;border-bottom:0.9px solid #444;"></div>
<div class="t" style="top:440.5px;height:9.8px;line-height:9.8px;font-size:7px;color:#000;white-space:nowrap;left:-1px;">常用</div>
<div class="t" style="top:440.5px;height:9.8px;line-height:9.8px;font-size:7px;color:#8a8a8a;white-space:nowrap;left:24.3px;">收藏夹</div>
<div style="left:50.3px;top:441.2px;width:0.8px;height:8.8px;background:#8a8a8a;"></div>
<div style="left:186.5px;top:42.1px;width:892.2px;height:399.7px;background:#000;"></div>
<div style="left:186.5px;top:441.8px;width:892.2px;height:1.8px;background:linear-gradient(#9a9a9a,#e4e4e4);"></div>
<svg style="left:0;top:0;width:1080px;height:540px" viewBox="0 0 1080 540"><rect x="186.5" y="42.1" width="892.2" height="399.7" fill="#000"/><rect x="186.5" y="42.1" width="892.2" height="2.4" fill="#454545"/><path d="M188.5 43.2 V441" stroke="#747474" stroke-width="0.9" fill="none"/><path d="M188.4 44.6 H1053" stroke="#fff" stroke-width="0.7" opacity="0.0"/><path d="M188.5 54.5 H1053 M188.5 73.6 H1053 M188.5 92.3 H1053 M188.5 111.0 H1053 M188.5 129.7 H1053 M188.5 148.4 H1053 M188.5 167.1 H1053 M188.5 185.8 H1053 M188.5 204.5 H1053 M188.5 223.2 H1053 M188.5 241.9 H1053 M188.5 260.6 H1053 M188.5 279.3 H1053 M188.5 298.0 H1053 M188.5 316.7 H1053 M188.5 335.4 H1053 M188.5 354.1 H1053 M188.5 372.8 H1053 M188.5 391.5 H1053 M188.5 410.2 H1053 M188.5 428.9 H1053" stroke="#8e9eb0" stroke-width="0.8" stroke-dasharray="1.6 1.74" fill="none"/><path d="M206.59 44.5 V430.4 M224.76 44.5 V430.4 M242.92 44.5 V430.4 M261.09 44.5 V430.4 M279.26 44.5 V430.4 M297.43 44.5 V430.4 M315.6 44.5 V430.4 M333.76 44.5 V430.4 M351.93 44.5 V430.4 M370.1 44.5 V430.4 M388.27 44.5 V430.4 M406.44 44.5 V430.4 M424.6 44.5 V430.4 M442.77 44.5 V430.4 M460.94 44.5 V430.4 M479.11 44.5 V430.4 M497.28 44.5 V430.4 M515.44 44.5 V430.4 M533.61 44.5 V430.4 M551.78 44.5 V430.4 M569.95 44.5 V430.4 M588.12 44.5 V430.4 M606.28 44.5 V430.4 M624.45 44.5 V430.4 M642.62 44.5 V430.4 M660.79 44.5 V430.4 M678.96 44.5 V430.4 M697.12 44.5 V430.4 M715.29 44.5 V430.4 M733.46 44.5 V430.4 M751.63 44.5 V430.4 M769.8 44.5 V430.4 M787.96 44.5 V430.4 M806.13 44.5 V430.4 M824.3 44.5 V430.4 M842.47 44.5 V430.4 M860.64 44.5 V430.4 M878.8 44.5 V430.4 M896.97 44.5 V430.4 M915.14 44.5 V430.4 M933.31 44.5 V430.4 M951.48 44.5 V430.4 M969.64 44.5 V430.4 M987.81 44.5 V430.4 M1005.98 44.5 V430.4 M1024.15 44.5 V430.4 M1042.32 44.5 V430.4" stroke="#8c9cae" stroke-width="0.75" stroke-dasharray="1.5 1.84" fill="none"/><path d="M188.5 186.2 H1053" stroke="#78848f" stroke-width="0.9"/><clipPath id="cc"><rect x="188.2" y="44.2" width="865" height="386.2"/></clipPath><g clip-path="url(#cc)"><path d="M188.42 360 V389 M188.42 408 V408 M197.5 379.5 V393.5 M197.5 408.5 V417.5 M206.59 357 V365 M206.59 394 V405 M215.67 318 V338.5 M215.67 365 V369 M224.76 322 V333 M224.76 338.5 V351 M233.84 292 V304 M233.84 333 V341 M242.92 276 V288 M242.92 305 V318 M252.01 271 V283.75 M252.01 288 V303 M261.09 279 V283.75 M261.09 341 V371 M270.18 335 V341.5 M270.18 375 V389.5 M279.26 343 V350 M279.26 375 V422 M288.34 260 V281.25 M288.34 350 V350 M297.43 216.25 V241.25 M297.43 281.25 V286 M306.51 221.25 V241.25 M306.51 264.5 V275 M315.6 238.75 V258.75 M315.6 264.5 V296 M324.68 241 V243.25 M324.68 258.75 V271 M333.76 237.5 V241.75 M333.76 271.25 V282.5 M342.85 247 V253.25 M342.85 271.25 V277.5 M351.93 237.5 V239.25 M351.93 253.25 V260 M361.02 201.25 V240 M361.02 268 V281 M370.1 253.75 V268.75 M370.1 282.5 V303 M379.18 228.75 V234.5 M379.18 282.5 V313 M388.27 197 V220 M388.27 234.25 V241.25 M397.35 173.75 V175 M397.35 219.25 V222.5 M406.44 172 V195.5 M415.52 153 V176.25 M415.52 229.5 V238 M551.78 74 V90 M551.78 100 V100 M560.86 73 V90 M560.86 100 V100 M569.95 61 V75 M569.95 100 V100 M824.3 268.75 V269.5 M824.3 299.5 V304.5 M833.38 296 V300 M833.38 320.5 V354 M842.47 278 V294.25 M842.47 320.5 V354 M851.55 271.25 V294.25 M851.55 302 V310.5 M860.64 293.75 V299.5 M860.64 302 V340.75 M869.72 286.25 V296.25 M869.72 299.5 V318.75 M878.8 288 V294.25 M878.8 296.75 V330 M887.89 294.5 V294.5 M887.89 330 V332.5 M896.97 299.5 V313.25 M896.97 329.5 V381.5 M906.06 283.75 V313.25 M906.06 326.75 V348.75 M915.14 272 V294.25 M915.14 326.75 V344.5 M924.22 213.75 V222 M924.22 294.25 V312.5 M933.31 186.25 V190.5 M933.31 222 V247 M942.39 183 V210 M951.48 190.5 V190.5 M951.48 237.5 V243.5 M960.56 225 V228.75 M960.56 237.5 V254 M969.64 138.75 V146.25 M969.64 228.75 V232.5 M978.73 134.5 V142.5 M978.73 146.25 V158.75 M987.81 118.75 V135 M987.81 148 V158 M996.9 143.75 V148.25 M996.9 197 V202.5 M1005.98 166.25 V171.25 M1005.98 197 V226.25 M1015.06 145 V169.5 M1015.06 171.25 V183 M1024.15 169.5 V169.5 M1024.15 187.5 V200.2 M1033.23 178 V200" stroke="#000" stroke-width="1.7" fill="none"/><path d="M188.42 360 V389 M188.42 408 V408 M197.5 379.5 V393.5 M197.5 408.5 V417.5 M206.59 357 V365 M206.59 394 V405 M215.67 318 V338.5 M215.67 365 V369 M224.76 322 V333 M224.76 338.5 V351 M233.84 292 V304 M233.84 333 V341 M242.92 276 V288 M242.92 305 V318 M252.01 271 V283.75 M252.01 288 V303 M261.09 279 V283.75 M261.09 341 V371 M270.18 335 V341.5 M270.18 375 V389.5 M279.26 343 V350 M279.26 375 V422 M288.34 260 V281.25 M288.34 350 V350 M297.43 216.25 V241.25 M297.43 281.25 V286 M306.51 221.25 V241.25 M306.51 264.5 V275 M315.6 238.75 V258.75 M315.6 264.5 V296 M324.68 241 V243.25 M324.68 258.75 V271 M333.76 237.5 V241.75 M333.76 271.25 V282.5 M342.85 247 V253.25 M342.85 271.25 V277.5 M351.93 237.5 V239.25 M351.93 253.25 V260 M361.02 201.25 V240 M361.02 268 V281 M370.1 253.75 V268.75 M370.1 282.5 V303 M379.18 228.75 V234.5 M379.18 282.5 V313 M388.27 197 V220 M388.27 234.25 V241.25 M397.35 173.75 V175 M397.35 219.25 V222.5 M406.44 172 V195.5 M415.52 153 V176.25 M415.52 229.5 V238 M551.78 74 V90 M551.78 100 V100 M560.86 73 V90 M560.86 100 V100 M569.95 61 V75 M569.95 100 V100 M824.3 268.75 V269.5 M824.3 299.5 V304.5 M833.38 296 V300 M833.38 320.5 V354 M842.47 278 V294.25 M842.47 320.5 V354 M851.55 271.25 V294.25 M851.55 302 V310.5 M860.64 293.75 V299.5 M860.64 302 V340.75 M869.72 286.25 V296.25 M869.72 299.5 V318.75 M878.8 288 V294.25 M878.8 296.75 V330 M887.89 294.5 V294.5 M887.89 330 V332.5 M896.97 299.5 V313.25 M896.97 329.5 V381.5 M906.06 283.75 V313.25 M906.06 326.75 V348.75 M915.14 272 V294.25 M915.14 326.75 V344.5 M924.22 213.75 V222 M924.22 294.25 V312.5 M933.31 186.25 V190.5 M933.31 222 V247 M942.39 183 V210 M951.48 190.5 V190.5 M951.48 237.5 V243.5 M960.56 225 V228.75 M960.56 237.5 V254 M969.64 138.75 V146.25 M969.64 228.75 V232.5 M978.73 134.5 V142.5 M978.73 146.25 V158.75 M987.81 118.75 V135 M987.81 148 V158 M996.9 143.75 V148.25 M996.9 197 V202.5 M1005.98 166.25 V171.25 M1005.98 197 V226.25 M1015.06 145 V169.5 M1015.06 171.25 V183 M1024.15 169.5 V169.5 M1024.15 187.5 V200.2 M1033.23 178 V200" stroke="#12aa12" stroke-width="1" fill="none"/><rect x="194.6" y="393.5" width="5.8" height="15.0" fill="#000" stroke="#1fc21f" stroke-width="0.75"/><rect x="203.69" y="365" width="5.8" height="29" fill="#000" stroke="#1fc21f" stroke-width="0.75"/><rect x="212.77" y="338.5" width="5.8" height="26.5" fill="#000" stroke="#1fc21f" stroke-width="0.75"/><rect x="221.86" y="333" width="5.8" height="5.5" fill="#000" stroke="#1fc21f" stroke-width="0.75"/><rect x="230.94" y="304" width="5.8" height="29" fill="#000" stroke="#1fc21f" stroke-width="0.75"/><rect x="240.02" y="288" width="5.8" height="17" fill="#000" stroke="#1fc21f" stroke-width="0.75"/><rect x="249.11" y="283.75" width="5.8" height="4.25" fill="#000" stroke="#1fc21f" stroke-width="0.75"/><rect x="276.36" y="350" width="5.8" height="25" fill="#000" stroke="#1fc21f" stroke-width="0.75"/><rect x="285.44" y="281.25" width="5.8" height="68.75" fill="#000" stroke="#1fc21f" stroke-width="0.75"/><rect x="294.53" y="241.25" width="5.8" height="40.0" fill="#000" stroke="#1fc21f" stroke-width="0.75"/><rect x="312.7" y="258.75" width="5.8" height="5.75" fill="#000" stroke="#1fc21f" stroke-width="0.75"/><rect x="321.78" y="243.25" width="5.8" height="15.5" fill="#000" stroke="#1fc21f" stroke-width="0.75"/><rect x="339.95" y="253.25" width="5.8" height="18.0" fill="#000" stroke="#1fc21f" stroke-width="0.75"/><rect x="349.03" y="239.25" width="5.8" height="14.0" fill="#000" stroke="#1fc21f" stroke-width="0.75"/><rect x="376.28" y="234.5" width="5.8" height="48.0" fill="#000" stroke="#1fc21f" stroke-width="0.75"/><rect x="385.37" y="220" width="5.8" height="14.25" fill="#000" stroke="#1fc21f" stroke-width="0.75"/><rect x="394.45" y="175" width="5.8" height="44.25" fill="#000" stroke="#1fc21f" stroke-width="0.75"/><rect x="403.84" y="175.35" width="5.2" height="1.1" fill="#6cf06c"/><rect x="548.88" y="90" width="5.8" height="10" fill="#000" stroke="#1fc21f" stroke-width="0.75"/><rect x="557.96" y="90" width="5.8" height="10" fill="#000" stroke="#1fc21f" stroke-width="0.75"/><rect x="839.57" y="294.25" width="5.8" height="26.25" fill="#000" stroke="#1fc21f" stroke-width="0.75"/><rect x="857.74" y="299.5" width="5.8" height="2.5" fill="#000" stroke="#1fc21f" stroke-width="0.75"/><rect x="866.82" y="296.25" width="5.8" height="3.25" fill="#000" stroke="#1fc21f" stroke-width="0.75"/><rect x="875.9" y="294.25" width="5.8" height="2.5" fill="#000" stroke="#1fc21f" stroke-width="0.75"/><rect x="894.07" y="313.25" width="5.8" height="16.25" fill="#000" stroke="#1fc21f" stroke-width="0.75"/><rect x="912.24" y="294.25" width="5.8" height="32.5" fill="#000" stroke="#1fc21f" stroke-width="0.75"/><rect x="921.32" y="222" width="5.8" height="72.25" fill="#000" stroke="#1fc21f" stroke-width="0.75"/><rect x="930.41" y="190.5" width="5.8" height="31.5" fill="#000" stroke="#1fc21f" stroke-width="0.75"/><rect x="939.79" y="190.1" width="5.2" height="1.1" fill="#6cf06c"/><rect x="957.66" y="228.75" width="5.8" height="8.75" fill="#000" stroke="#1fc21f" stroke-width="0.75"/><rect x="966.74" y="146.25" width="5.8" height="82.5" fill="#000" stroke="#1fc21f" stroke-width="0.75"/><rect x="975.83" y="142.5" width="5.8" height="3.75" fill="#000" stroke="#1fc21f" stroke-width="0.75"/><rect x="1003.08" y="171.25" width="5.8" height="25.75" fill="#000" stroke="#1fc21f" stroke-width="0.75"/><rect x="1012.16" y="169.5" width="5.8" height="1.75" fill="#000" stroke="#1fc21f" stroke-width="0.75"/><rect x="1030.63" y="185.75" width="5.2" height="2.25" fill="#000" stroke="#20c020" stroke-width="0.7"/><rect x="185.32" y="389" width="6.2" height="19" fill="#fff" stroke="#30d030" stroke-width="0.5"/><rect x="257.99" y="283.75" width="6.2" height="57.25" fill="#fff" stroke="#30d030" stroke-width="0.5"/><rect x="267.08" y="341.5" width="6.2" height="33.5" fill="#fff" stroke="#30d030" stroke-width="0.5"/><rect x="303.41" y="241.25" width="6.2" height="23.25" fill="#fff" stroke="#30d030" stroke-width="0.5"/><rect x="330.66" y="241.75" width="6.2" height="29.5" fill="#fff" stroke="#30d030" stroke-width="0.5"/><rect x="357.92" y="240" width="6.2" height="28" fill="#fff" stroke="#30d030" stroke-width="0.5"/><rect x="367.0" y="268.75" width="6.2" height="13.75" fill="#fff" stroke="#30d030" stroke-width="0.5"/><rect x="412.42" y="176.25" width="6.2" height="53.25" fill="#fff" stroke="#30d030" stroke-width="0.5"/><rect x="566.85" y="75" width="6.2" height="25" fill="#fff" stroke="#30d030" stroke-width="0.5"/><rect x="821.2" y="269.5" width="6.2" height="30.0" fill="#fff" stroke="#30d030" stroke-width="0.5"/><rect x="830.28" y="300" width="6.2" height="20.5" fill="#fff" stroke="#30d030" stroke-width="0.5"/><rect x="848.45" y="294.25" width="6.2" height="7.75" fill="#fff" stroke="#30d030" stroke-width="0.5"/><rect x="884.79" y="294.5" width="6.2" height="35.5" fill="#fff" stroke="#30d030" stroke-width="0.5"/><rect x="902.96" y="313.25" width="6.2" height="13.5" fill="#fff" stroke="#30d030" stroke-width="0.5"/><rect x="948.38" y="190.5" width="6.2" height="47.0" fill="#fff" stroke="#30d030" stroke-width="0.5"/><rect x="984.71" y="135" width="6.2" height="13" fill="#fff" stroke="#30d030" stroke-width="0.5"/><rect x="993.8" y="148.25" width="6.2" height="48.75" fill="#fff" stroke="#30d030" stroke-width="0.5"/><rect x="1021.05" y="169.5" width="6.2" height="18.0" fill="#fff" stroke="#30d030" stroke-width="0.5"/></g><path d="M1053.3 44 V430.6 M188.4 430.6 H1053.6" stroke="#e8e8e8" stroke-width="0.8" fill="none"/><path d="M188.6 430.6 V432.6 M224.94 430.6 V432.6 M261.27 430.6 V432.6 M297.61 430.6 V432.6 M333.94 430.6 V432.6 M370.28 430.6 V432.6 M406.62 430.6 V432.6 M442.95 430.6 V432.6 M479.29 430.6 V432.6 M515.62 430.6 V432.6 M551.96 430.6 V432.6 M588.3 430.6 V432.6 M624.63 430.6 V432.6 M660.97 430.6 V432.6 M697.3 430.6 V432.6 M733.64 430.6 V432.6 M769.98 430.6 V432.6 M806.31 430.6 V432.6 M842.65 430.6 V432.6 M878.98 430.6 V432.6 M915.32 430.6 V432.6 M951.66 430.6 V432.6 M987.99 430.6 V432.6 M1024.33 430.6 V432.6 M1053.3 54.9 H1055 M1053.3 73.6 H1055 M1053.3 92.3 H1055 M1053.3 111.0 H1055 M1053.3 129.7 H1055 M1053.3 148.4 H1055 M1053.3 167.1 H1055 M1053.3 185.8 H1055 M1053.3 204.5 H1055 M1053.3 223.2 H1055 M1053.3 241.9 H1055 M1053.3 260.6 H1055 M1053.3 279.3 H1055 M1053.3 298.0 H1055 M1053.3 316.7 H1055 M1053.3 335.4 H1055 M1053.3 354.1 H1055 M1053.3 372.8 H1055 M1053.3 391.5 H1055 M1053.3 410.2 H1055 M1053.3 428.9 H1055" stroke="#e8e8e8" stroke-width="0.8" fill="none"/></svg>
<div class="t" style="top:51.78px;height:7.84px;line-height:7.84px;font-size:5.6px;color:#f4f4f4;white-space:nowrap;left:1056.3px;letter-spacing:-0.05px;">4502.80</div>
<div class="t" style="top:70.48px;height:7.84px;line-height:7.84px;font-size:5.6px;color:#f4f4f4;white-space:nowrap;left:1056.3px;letter-spacing:-0.05px;">4497.40</div>
<div class="t" style="top:89.18px;height:7.84px;line-height:7.84px;font-size:5.6px;color:#f4f4f4;white-space:nowrap;left:1056.3px;letter-spacing:-0.05px;">4492.00</div>
<div class="t" style="top:107.88px;height:7.84px;line-height:7.84px;font-size:5.6px;color:#f4f4f4;white-space:nowrap;left:1056.3px;letter-spacing:-0.05px;">4486.45</div>
<div class="t" style="top:126.58px;height:7.84px;line-height:7.84px;font-size:5.6px;color:#f4f4f4;white-space:nowrap;left:1056.3px;letter-spacing:-0.05px;">4481.05</div>
<div class="t" style="top:145.28px;height:7.84px;line-height:7.84px;font-size:5.6px;color:#f4f4f4;white-space:nowrap;left:1056.3px;letter-spacing:-0.05px;">4475.65</div>
<div class="t" style="top:163.98px;height:7.84px;line-height:7.84px;font-size:5.6px;color:#f4f4f4;white-space:nowrap;left:1056.3px;letter-spacing:-0.05px;">4470.10</div>
<div class="t" style="top:201.38px;height:7.84px;line-height:7.84px;font-size:5.6px;color:#f4f4f4;white-space:nowrap;left:1056.3px;letter-spacing:-0.05px;">4459.30</div>
<div class="t" style="top:220.08px;height:7.84px;line-height:7.84px;font-size:5.6px;color:#f4f4f4;white-space:nowrap;left:1056.3px;letter-spacing:-0.05px;">4453.90</div>
<div class="t" style="top:238.78px;height:7.84px;line-height:7.84px;font-size:5.6px;color:#f4f4f4;white-space:nowrap;left:1056.3px;letter-spacing:-0.05px;">4448.35</div>
<div class="t" style="top:257.48px;height:7.84px;line-height:7.84px;font-size:5.6px;color:#f4f4f4;white-space:nowrap;left:1056.3px;letter-spacing:-0.05px;">4442.95</div>
<div class="t" style="top:276.18px;height:7.84px;line-height:7.84px;font-size:5.6px;color:#f4f4f4;white-space:nowrap;left:1056.3px;letter-spacing:-0.05px;">4437.55</div>
<div class="t" style="top:294.88px;height:7.84px;line-height:7.84px;font-size:5.6px;color:#f4f4f4;white-space:nowrap;left:1056.3px;letter-spacing:-0.05px;">4432.15</div>
<div class="t" style="top:313.58px;height:7.84px;line-height:7.84px;font-size:5.6px;color:#f4f4f4;white-space:nowrap;left:1056.3px;letter-spacing:-0.05px;">4426.60</div>
<div class="t" style="top:332.28px;height:7.84px;line-height:7.84px;font-size:5.6px;color:#f4f4f4;white-space:nowrap;left:1056.3px;letter-spacing:-0.05px;">4421.20</div>
<div class="t" style="top:350.98px;height:7.84px;line-height:7.84px;font-size:5.6px;color:#f4f4f4;white-space:nowrap;left:1056.3px;letter-spacing:-0.05px;">4415.80</div>
<div class="t" style="top:369.68px;height:7.84px;line-height:7.84px;font-size:5.6px;color:#f4f4f4;white-space:nowrap;left:1056.3px;letter-spacing:-0.05px;">4410.40</div>
<div class="t" style="top:388.38px;height:7.84px;line-height:7.84px;font-size:5.6px;color:#f4f4f4;white-space:nowrap;left:1056.3px;letter-spacing:-0.05px;">4404.85</div>
<div class="t" style="top:407.08px;height:7.84px;line-height:7.84px;font-size:5.6px;color:#f4f4f4;white-space:nowrap;left:1056.3px;letter-spacing:-0.05px;">4399.45</div>
<div class="t" style="top:425.78px;height:7.84px;line-height:7.84px;font-size:5.6px;color:#f4f4f4;white-space:nowrap;left:1056.3px;letter-spacing:-0.05px;">4394.05</div>
<div style="left:1054.6px;top:183.2px;width:22.6px;height:6.8px;background:#e8e8e8;"></div>
<div class="t" style="top:183.08px;height:7.84px;line-height:7.84px;font-size:5.6px;color:#000;white-space:nowrap;left:1056.3px;letter-spacing:-0.05px;">4464.62</div>
<div class="t" style="top:433.22px;height:7.56px;line-height:7.56px;font-size:5.4px;color:#f4f4f4;white-space:nowrap;left:188.4px;letter-spacing:-0.14px;">5 Jan 2026</div>
<div class="t" style="top:433.22px;height:7.56px;line-height:7.56px;font-size:5.4px;color:#f4f4f4;white-space:nowrap;left:224.74px;letter-spacing:-0.14px;">5 Jan 09:00</div>
<div class="t" style="top:433.22px;height:7.56px;line-height:7.56px;font-size:5.4px;color:#f4f4f4;white-space:nowrap;left:261.07px;letter-spacing:-0.14px;">5 Jan 13:00</div>
<div class="t" style="top:433.22px;height:7.56px;line-height:7.56px;font-size:5.4px;color:#f4f4f4;white-space:nowrap;left:297.41px;letter-spacing:-0.14px;">5 Jan 17:00</div>
<div class="t" style="top:433.22px;height:7.56px;line-height:7.56px;font-size:5.4px;color:#f4f4f4;white-space:nowrap;left:333.74px;letter-spacing:-0.14px;">5 Jan 21:00</div>
<div class="t" style="top:433.22px;height:7.56px;line-height:7.56px;font-size:5.4px;color:#f4f4f4;white-space:nowrap;left:370.08px;letter-spacing:-0.14px;">6 Jan 02:00</div>
<div class="t" style="top:433.22px;height:7.56px;line-height:7.56px;font-size:5.4px;color:#f4f4f4;white-space:nowrap;left:406.42px;letter-spacing:-0.14px;">6 Jan 06:00</div>
<div class="t" style="top:433.22px;height:7.56px;line-height:7.56px;font-size:5.4px;color:#f4f4f4;white-space:nowrap;left:442.75px;letter-spacing:-0.14px;">6 Jan 10:00</div>
<div class="t" style="top:433.22px;height:7.56px;line-height:7.56px;font-size:5.4px;color:#f4f4f4;white-space:nowrap;left:479.09px;letter-spacing:-0.14px;">6 Jan 14:00</div>
<div class="t" style="top:433.22px;height:7.56px;line-height:7.56px;font-size:5.4px;color:#f4f4f4;white-space:nowrap;left:515.42px;letter-spacing:-0.14px;">6 Jan 18:00</div>
<div class="t" style="top:433.22px;height:7.56px;line-height:7.56px;font-size:5.4px;color:#f4f4f4;white-space:nowrap;left:551.76px;letter-spacing:-0.14px;">6 Jan 22:00</div>
<div class="t" style="top:433.22px;height:7.56px;line-height:7.56px;font-size:5.4px;color:#f4f4f4;white-space:nowrap;left:588.1px;letter-spacing:-0.14px;">7 Jan 03:00</div>
<div class="t" style="top:433.22px;height:7.56px;line-height:7.56px;font-size:5.4px;color:#f4f4f4;white-space:nowrap;left:624.43px;letter-spacing:-0.14px;">7 Jan 07:00</div>
<div class="t" style="top:433.22px;height:7.56px;line-height:7.56px;font-size:5.4px;color:#f4f4f4;white-space:nowrap;left:660.77px;letter-spacing:-0.14px;">7 Jan 11:00</div>
<div class="t" style="top:433.22px;height:7.56px;line-height:7.56px;font-size:5.4px;color:#f4f4f4;white-space:nowrap;left:697.1px;letter-spacing:-0.14px;">7 Jan 15:00</div>
<div class="t" style="top:433.22px;height:7.56px;line-height:7.56px;font-size:5.4px;color:#f4f4f4;white-space:nowrap;left:733.44px;letter-spacing:-0.14px;">7 Jan 19:00</div>
<div class="t" style="top:433.22px;height:7.56px;line-height:7.56px;font-size:5.4px;color:#f4f4f4;white-space:nowrap;left:769.78px;letter-spacing:-0.14px;">7 Jan 23:00</div>
<div class="t" style="top:433.22px;height:7.56px;line-height:7.56px;font-size:5.4px;color:#f4f4f4;white-space:nowrap;left:806.11px;letter-spacing:-0.14px;">8 Jan 04:00</div>
<div class="t" style="top:433.22px;height:7.56px;line-height:7.56px;font-size:5.4px;color:#f4f4f4;white-space:nowrap;left:842.45px;letter-spacing:-0.14px;">8 Jan 08:00</div>
<div class="t" style="top:433.22px;height:7.56px;line-height:7.56px;font-size:5.4px;color:#f4f4f4;white-space:nowrap;left:878.78px;letter-spacing:-0.14px;">8 Jan 12:00</div>
<div class="t" style="top:433.22px;height:7.56px;line-height:7.56px;font-size:5.4px;color:#f4f4f4;white-space:nowrap;left:915.12px;letter-spacing:-0.14px;">8 Jan 16:00</div>
<div class="t" style="top:433.22px;height:7.56px;line-height:7.56px;font-size:5.4px;color:#f4f4f4;white-space:nowrap;left:951.46px;letter-spacing:-0.14px;">8 Jan 20:00</div>
<div class="t" style="top:433.22px;height:7.56px;line-height:7.56px;font-size:5.4px;color:#f4f4f4;white-space:nowrap;left:987.79px;letter-spacing:-0.14px;">9 Jan 01:00</div>
<div class="t" style="top:433.22px;height:7.56px;line-height:7.56px;font-size:5.4px;color:#f4f4f4;white-space:nowrap;left:1024.13px;letter-spacing:-0.14px;">9 Jan 05:00</div>
<svg style="left:190.4px;top:47.8px;width:4px;height:3px" viewBox="0 0 4 3"><path d="M0.1 0.2 H3.7 L1.9 2.4 Z" fill="#fff"/></svg>
<div class="t" style="top:45.08px;height:7.84px;line-height:7.84px;font-size:5.6px;color:#f4f4f4;white-space:nowrap;left:197px;letter-spacing:-0.12px;">XAUUSD,H1&nbsp; 4464.15 4466.92 4460.80 4464.62</div>
<div class="t" style="top:59.09px;height:7.63px;line-height:7.63px;font-size:5.45px;color:#f4f4f4;white-space:nowrap;left:190.5px;letter-spacing:-0.08px;">Internet connection problem</div>
<div class="t" style="top:44.66px;height:7.49px;line-height:7.49px;font-size:5.35px;color:#f4f4f4;white-space:nowrap;right:36.4px;text-align:right;letter-spacing:-0.1px;">[eaclubshare.com]黄金多策略对冲</div>
<svg style="left:1044.2px;top:45px;width:6.8px;height:6.8px" viewBox="0 0 8 8"><circle cx="4" cy="4" r="3.2" fill="none" stroke="#e8e8e8" stroke-width="0.7"/><circle cx="2.9" cy="3.2" r="0.5" fill="#e8e8e8"/><circle cx="5.1" cy="3.2" r="0.5" fill="#e8e8e8"/><path d="M2.4 4.8 Q4 6.4 5.6 4.8" fill="none" stroke="#e8e8e8" stroke-width="0.6"/></svg>
<div style="left:186px;top:443.6px;width:894px;height:12px;background:#f0f0f0;"></div>
<div class="t" style="top:445.32px;height:10.36px;line-height:10.36px;font-size:7.4px;color:#858585;white-space:nowrap;left:175.0px;width:80px;text-align:center;transform:scaleX(0.91);transform-origin:50% 50%;">EURUSD,H1</div>
<div style="left:240.8px;top:445px;width:0.8px;height:8.2px;background:#858585;"></div>
<div class="t" style="top:445.32px;height:10.36px;line-height:10.36px;font-size:7.4px;color:#858585;white-space:nowrap;left:227.0px;width:80px;text-align:center;transform:scaleX(0.91);transform-origin:50% 50%;">XAUUSD,H1</div>
<div style="left:293px;top:445px;width:0.8px;height:8.2px;background:#858585;"></div>
<div class="t" style="top:445.32px;height:10.36px;line-height:10.36px;font-size:7.4px;color:#858585;white-space:nowrap;left:281.0px;width:80px;text-align:center;transform:scaleX(0.91);transform-origin:50% 50%;">XAUUSD,M15</div>
<div style="left:350.6px;top:441px;width:52px;height:13.6px;background:#fff;border:0.9px solid #444;border-top:none;border-radius:0 0 1.5px 1.5px;"></div>
<div class="t" style="top:445.32px;height:10.36px;line-height:10.36px;font-size:7.4px;color:#000;white-space:nowrap;left:336.6px;width:80px;text-align:center;transform:scaleX(0.91);transform-origin:50% 50%;">XAUUSD,H1</div>
<div class="t" style="top:445.32px;height:10.36px;line-height:10.36px;font-size:7.4px;color:#858585;white-space:nowrap;left:386.8px;width:80px;text-align:center;transform:scaleX(0.91);transform-origin:50% 50%;">BTCUSD,H1</div>
<div style="left:452.5px;top:445px;width:0.8px;height:8.2px;background:#858585;"></div>
<div class="t" style="top:443.7px;height:9.8px;line-height:9.8px;font-size:7px;color:#777;white-space:nowrap;left:1059.0px;width:8px;text-align:center;">‹</div>
<div class="t" style="top:443.7px;height:9.8px;line-height:9.8px;font-size:7px;color:#777;white-space:nowrap;left:1069.3px;width:8px;text-align:center;">›</div>
<div style="left:0px;top:457.4px;width:1077.8px;height:82.6px;background:#ffffff;"></div>
<div style="left:0px;top:456.8px;width:1080px;height:0.7px;background:#dadada;"></div>
<div style="left:1077.8px;top:457.4px;width:2.2px;height:82.6px;background:#f0f0f0;"></div>
<div class="t" style="top:459.5px;height:9.8px;line-height:9.8px;font-size:7px;color:#222;white-space:nowrap;left:3px;">订单</div>
<div class="t" style="top:460.85px;height:7.7px;line-height:7.7px;font-size:5.5px;color:#888;white-space:nowrap;left:22.5px;">/</div>
<div class="t" style="top:459.5px;height:9.8px;line-height:9.8px;font-size:7px;color:#222;white-space:nowrap;right:876.5px;text-align:right;">时间</div>
<div class="t" style="top:459.5px;height:9.8px;line-height:9.8px;font-size:7px;color:#222;white-space:nowrap;right:816.5px;text-align:right;">类型</div>
<div class="t" style="top:459.5px;height:9.8px;line-height:9.8px;font-size:7px;color:#222;white-space:nowrap;right:769.5px;text-align:right;">手数</div>
<div class="t" style="top:459.5px;height:9.8px;line-height:9.8px;font-size:7px;color:#222;white-space:nowrap;right:709.5px;text-align:right;">交易品种</div>
<div class="t" style="top:459.5px;height:9.8px;line-height:9.8px;font-size:7px;color:#222;white-space:nowrap;right:643px;text-align:right;">价格</div>
<div class="t" style="top:459.5px;height:9.8px;line-height:9.8px;font-size:7px;color:#222;white-space:nowrap;right:575.5px;text-align:right;">止损</div>
<div class="t" style="top:459.5px;height:9.8px;line-height:9.8px;font-size:7px;color:#222;white-space:nowrap;right:509px;text-align:right;">止盈</div>
<div class="t" style="top:459.5px;height:9.8px;line-height:9.8px;font-size:7px;color:#222;white-space:nowrap;right:442px;text-align:right;">价格</div>
<div class="t" style="top:459.5px;height:9.8px;line-height:9.8px;font-size:7px;color:#222;white-space:nowrap;right:374.5px;text-align:right;">手续费</div>
<div class="t" style="top:459.5px;height:9.8px;line-height:9.8px;font-size:7px;color:#222;white-space:nowrap;right:307.5px;text-align:right;">库存费</div>
<div class="t" style="top:459.5px;height:9.8px;line-height:9.8px;font-size:7px;color:#222;white-space:nowrap;right:206px;text-align:right;">获利</div>
<div class="t" style="top:459.5px;height:9.8px;line-height:9.8px;font-size:7px;color:#222;white-space:nowrap;right:6px;text-align:right;">注释</div>
<div style="left:86px;top:458px;width:0.7px;height:12.6px;background:#e4e4e4;"></div>
<div style="left:206.5px;top:458px;width:0.7px;height:12.6px;background:#e4e4e4;"></div>
<div style="left:266.5px;top:458px;width:0.7px;height:12.6px;background:#e4e4e4;"></div>
<div style="left:313.5px;top:458px;width:0.7px;height:12.6px;background:#e4e4e4;"></div>
<div style="left:373.5px;top:458px;width:0.7px;height:12.6px;background:#e4e4e4;"></div>
<div style="left:440px;top:458px;width:0.7px;height:12.6px;background:#e4e4e4;"></div>
<div style="left:507px;top:458px;width:0.7px;height:12.6px;background:#e4e4e4;"></div>
<div style="left:574px;top:458px;width:0.7px;height:12.6px;background:#e4e4e4;"></div>
<div style="left:640.3px;top:458px;width:0.7px;height:12.6px;background:#e4e4e4;"></div>
<div style="left:708.6px;top:458px;width:0.7px;height:12.6px;background:#e4e4e4;"></div>
<div style="left:775.2px;top:458px;width:0.7px;height:12.6px;background:#e4e4e4;"></div>
<div style="left:876.3px;top:458px;width:0.7px;height:12.6px;background:#e4e4e4;"></div>
<div style="left:0px;top:471.4px;width:1077.8px;height:11.2px;background:#c9c9c9;"></div>
<svg style="left:2.6px;top:474px;width:5.4px;height:5.4px" viewBox="0 0 6 6"><circle cx="3" cy="3" r="2.4" fill="#e6e6e6" stroke="#777" stroke-width="0.7"/><circle cx="3" cy="3" r="0.9" fill="#999"/></svg>
<div class="t" style="top:472.5px;height:9.8px;line-height:9.8px;font-size:7px;color:#111;white-space:nowrap;left:12px;font-weight:bold;letter-spacing:0.02px;">余额: 2 126.58 USD&nbsp; 净值: 2 126.58&nbsp; 可用预付款: 2 126.58</div>
<div class="t" style="top:472.5px;height:9.8px;line-height:9.8px;font-size:7px;color:#111;white-space:nowrap;right:206.5px;text-align:right;font-weight:bold;">0.00</div>
<div class="t" style="top:526.48px;height:5.04px;line-height:5.04px;font-size:3.6px;color:#e9e9e9;white-space:nowrap;left:623px;letter-spacing:-0.1px;">ITAIKK</div>
<div style="left:421.2px;top:78.7px;width:397.8px;height:342.9px;background:#f0f0f0;border-radius:3.6px;box-shadow:0 0 0 0.4px rgba(250,250,250,0.9);overflow:hidden;"><div style="left:0px;top:0px;width:397.8px;height:16.9px;background:#ffffff;"></div></div>
<div class="t" style="top:82.0px;height:10.01px;line-height:10.01px;font-size:7.15px;color:#9a9a9a;white-space:nowrap;left:426.2px;letter-spacing:0px;">Expert - [eaclubshare.com]黄金多策略对冲</div>
<div class="t" style="top:81.35px;height:10.5px;line-height:10.5px;font-size:7.5px;color:#8a8a8a;white-space:nowrap;left:775.2px;width:10px;text-align:center;">?</div>
<svg style="left:802.4px;top:83px;width:7.4px;height:7.4px" viewBox="0 0 8 8"><path d="M0.8 0.8 L7.2 7.2 M7.2 0.8 L0.8 7.2" stroke="#777" stroke-width="0.8" fill="none"/></svg>
<div style="left:425.2px;top:113.6px;width:390.4px;height:288.1px;background:#fbfbfb;border:0.6px solid #e6e6e6;"></div>
<div style="left:427px;top:101.3px;width:26.3px;height:13px;background:#f5f5f5;border:0.5px solid #e0e0e0;border-bottom:none;"></div>
<div style="left:453.3px;top:101.3px;width:26.2px;height:13px;background:#f5f5f5;border:0.5px solid #e0e0e0;border-bottom:none;"></div>
<div style="left:515.3px;top:101.3px;width:31.7px;height:13px;background:#f5f5f5;border:0.5px solid #e0e0e0;border-bottom:none;"></div>
<div style="left:480px;top:100.4px;width:35.2px;height:14.2px;background:#fbfbfb;border:0.6px solid #dcdcdc;border-bottom:none;"></div>
<div class="t" style="top:103.17px;height:9.66px;line-height:9.66px;font-size:6.9px;color:#111;white-space:nowrap;left:429.6px;">关于</div>
<div class="t" style="top:103.17px;height:9.66px;line-height:9.66px;font-size:6.9px;color:#111;white-space:nowrap;left:456.8px;">常用</div>
<div class="t" style="top:102.47px;height:9.66px;line-height:9.66px;font-size:6.9px;color:#111;white-space:nowrap;left:483.8px;">输入参数</div>
<div class="t" style="top:103.17px;height:9.66px;line-height:9.66px;font-size:6.9px;color:#111;white-space:nowrap;left:518.2px;">依存关系</div>
<div style="left:432px;top:119.4px;width:303.8px;height:278.2px;background:#ffffff;border:0.7px solid #bcbcbc;"></div>
<div class="t" style="top:122.87px;height:9.66px;line-height:9.66px;font-size:6.9px;color:#111;white-space:nowrap;left:436.4px;">变量</div>
<div class="t" style="top:122.87px;height:9.66px;line-height:9.66px;font-size:6.9px;color:#111;white-space:nowrap;left:582.5px;">赋值</div>
<div style="left:578.2px;top:120px;width:0.7px;height:277px;background:#e3e3e3;"></div>
<div style="left:432.7px;top:133.8px;width:292.6px;height:0.6px;background:#e8e8e8;"></div>
<svg style="left:433.8px;top:135.98px;width:9.4px;height:8.6px" viewBox="0 0 9.4 8.6"><path d="M1.6 0.4 H6.6 L8.9 2.2 V7.4 Q8.9 8.2 8.1 8.2 H6.6 L6 7.3 H3.4 L2.8 8.2 H1.3 Q0.5 8.2 0.5 7.4 V1.5 Q0.5 0.4 1.6 0.4 Z" fill="#f3e27c" stroke="#cdb84a" stroke-width="0.5"/><text x="4.6" y="6.0" font-size="4.4" font-weight="bold" text-anchor="middle" fill="#6e6010" font-family="Liberation Sans,sans-serif">ab</text></svg>
<div class="t" style="top:135.56px;height:10.43px;line-height:10.43px;font-size:7.45px;color:#1a1a1a;white-space:nowrap;left:445px;letter-spacing:-0.1px;-webkit-text-stroke:0.1px #1a1a1a;">GS</div>
<div class="t" style="top:135.56px;height:10.43px;line-height:10.43px;font-size:7.45px;color:#1a1a1a;white-space:nowrap;left:581px;letter-spacing:-0.06px;-webkit-text-stroke:0.1px #1a1a1a;"><span style="letter-spacing:0.72px">========</span> General Settings <span style="letter-spacing:0.72px">======</span>...</div>
<div style="left:432.7px;top:146.15px;width:292.6px;height:11.65px;background:#ebebeb;"></div>
<svg style="left:433.8px;top:147.92px;width:9.4px;height:8.6px" viewBox="0 0 9.4 8.6"><path d="M1.6 0.4 H6.6 L8.9 2.2 V7.4 Q8.9 8.2 8.1 8.2 H6.6 L6 7.3 H3.4 L2.8 8.2 H1.3 Q0.5 8.2 0.5 7.4 V1.5 Q0.5 0.4 1.6 0.4 Z" fill="#86bdf2" stroke="#5a94d4" stroke-width="0.5"/><text x="4.6" y="5.9" font-size="4.1" font-weight="bold" text-anchor="middle" fill="#1c3c78" font-family="Liberation Sans,sans-serif" letter-spacing="-0.3">123</text></svg>
<div class="t" style="top:147.5px;height:10.43px;line-height:10.43px;font-size:7.45px;color:#1a1a1a;white-space:nowrap;left:445px;letter-spacing:-0.1px;-webkit-text-stroke:0.1px #1a1a1a;">Backtest_GMT_Offset</div>
<div class="t" style="top:147.5px;height:10.43px;line-height:10.43px;font-size:7.45px;color:#1a1a1a;white-space:nowrap;left:581px;letter-spacing:-0.06px;-webkit-text-stroke:0.1px #1a1a1a;">2</div>
<svg style="left:433.8px;top:159.87px;width:9.4px;height:8.6px" viewBox="0 0 9.4 8.6"><path d="M1.6 0.4 H6.6 L8.9 2.2 V7.4 Q8.9 8.2 8.1 8.2 H6.6 L6 7.3 H3.4 L2.8 8.2 H1.3 Q0.5 8.2 0.5 7.4 V1.5 Q0.5 0.4 1.6 0.4 Z" fill="#74e074" stroke="#4cc04c" stroke-width="0.5"/><path d="M2 5.6 L4 3 L5.4 4.6 L7.4 4.4" fill="none" stroke="#0f6a0f" stroke-width="0.9"/></svg>
<div class="t" style="top:159.45px;height:10.43px;line-height:10.43px;font-size:7.45px;color:#1a1a1a;white-space:nowrap;left:445px;letter-spacing:-0.1px;-webkit-text-stroke:0.1px #1a1a1a;">UseCustomPair</div>
<div class="t" style="top:159.45px;height:10.43px;line-height:10.43px;font-size:7.45px;color:#1a1a1a;white-space:nowrap;left:581px;letter-spacing:-0.06px;-webkit-text-stroke:0.1px #1a1a1a;">false</div>
<div style="left:432.7px;top:170.05px;width:292.6px;height:11.65px;background:#ebebeb;"></div>
<svg style="left:433.8px;top:171.82px;width:9.4px;height:8.6px" viewBox="0 0 9.4 8.6"><path d="M1.6 0.4 H6.6 L8.9 2.2 V7.4 Q8.9 8.2 8.1 8.2 H6.6 L6 7.3 H3.4 L2.8 8.2 H1.3 Q0.5 8.2 0.5 7.4 V1.5 Q0.5 0.4 1.6 0.4 Z" fill="#f3e27c" stroke="#cdb84a" stroke-width="0.5"/><text x="4.6" y="6.0" font-size="4.4" font-weight="bold" text-anchor="middle" fill="#6e6010" font-family="Liberation Sans,sans-serif">ab</text></svg>
<div class="t" style="top:171.41px;height:10.43px;line-height:10.43px;font-size:7.45px;color:#1a1a1a;white-space:nowrap;left:445px;letter-spacing:-0.1px;-webkit-text-stroke:0.1px #1a1a1a;">UseSettingsFrom</div>
<div class="t" style="top:171.41px;height:10.43px;line-height:10.43px;font-size:7.45px;color:#1a1a1a;white-space:nowrap;left:581px;letter-spacing:-0.06px;-webkit-text-stroke:0.1px #1a1a1a;">XAUUSD</div>
<svg style="left:433.8px;top:183.77px;width:9.4px;height:8.6px" viewBox="0 0 9.4 8.6"><path d="M1.6 0.4 H6.6 L8.9 2.2 V7.4 Q8.9 8.2 8.1 8.2 H6.6 L6 7.3 H3.4 L2.8 8.2 H1.3 Q0.5 8.2 0.5 7.4 V1.5 Q0.5 0.4 1.6 0.4 Z" fill="#f3e27c" stroke="#cdb84a" stroke-width="0.5"/><text x="4.6" y="6.0" font-size="4.4" font-weight="bold" text-anchor="middle" fill="#6e6010" font-family="Liberation Sans,sans-serif">ab</text></svg>
<div class="t" style="top:183.35px;height:10.43px;line-height:10.43px;font-size:7.45px;color:#1a1a1a;white-space:nowrap;left:445px;letter-spacing:-0.1px;-webkit-text-stroke:0.1px #1a1a1a;">EA_Comment</div>
<div class="t" style="top:183.35px;height:10.43px;line-height:10.43px;font-size:7.45px;color:#1a1a1a;white-space:nowrap;left:581px;letter-spacing:-0.06px;-webkit-text-stroke:0.1px #1a1a1a;">eaclubshare.com</div>
<div style="left:432.7px;top:193.95px;width:292.6px;height:11.65px;background:#ebebeb;"></div>
<svg style="left:433.8px;top:195.73px;width:9.4px;height:8.6px" viewBox="0 0 9.4 8.6"><path d="M1.6 0.4 H6.6 L8.9 2.2 V7.4 Q8.9 8.2 8.1 8.2 H6.6 L6 7.3 H3.4 L2.8 8.2 H1.3 Q0.5 8.2 0.5 7.4 V1.5 Q0.5 0.4 1.6 0.4 Z" fill="#a6e2f2" stroke="#6cbcd8" stroke-width="0.5"/><text x="4.6" y="5.9" font-size="4.4" font-weight="bold" text-anchor="middle" fill="#1c6a88" font-family="Liberation Sans,sans-serif">½</text></svg>
<div class="t" style="top:195.31px;height:10.43px;line-height:10.43px;font-size:7.45px;color:#1a1a1a;white-space:nowrap;left:445px;letter-spacing:-0.1px;-webkit-text-stroke:0.1px #1a1a1a;">MaxSpread</div>
<div class="t" style="top:195.31px;height:10.43px;line-height:10.43px;font-size:7.45px;color:#1a1a1a;white-space:nowrap;left:581px;letter-spacing:-0.06px;-webkit-text-stroke:0.1px #1a1a1a;">2.5</div>
<svg style="left:433.8px;top:207.67px;width:9.4px;height:8.6px" viewBox="0 0 9.4 8.6"><path d="M1.6 0.4 H6.6 L8.9 2.2 V7.4 Q8.9 8.2 8.1 8.2 H6.6 L6 7.3 H3.4 L2.8 8.2 H1.3 Q0.5 8.2 0.5 7.4 V1.5 Q0.5 0.4 1.6 0.4 Z" fill="#a6e2f2" stroke="#6cbcd8" stroke-width="0.5"/><text x="4.6" y="5.9" font-size="4.4" font-weight="bold" text-anchor="middle" fill="#1c6a88" font-family="Liberation Sans,sans-serif">½</text></svg>
<div class="t" style="top:207.25px;height:10.43px;line-height:10.43px;font-size:7.45px;color:#1a1a1a;white-space:nowrap;left:445px;letter-spacing:-0.1px;-webkit-text-stroke:0.1px #1a1a1a;">Slippage</div>
<div class="t" style="top:207.25px;height:10.43px;line-height:10.43px;font-size:7.45px;color:#1a1a1a;white-space:nowrap;left:581px;letter-spacing:-0.06px;-webkit-text-stroke:0.1px #1a1a1a;">0.5</div>
<div style="left:432.7px;top:217.85px;width:292.6px;height:11.65px;background:#ebebeb;"></div>
<svg style="left:433.8px;top:219.62px;width:9.4px;height:8.6px" viewBox="0 0 9.4 8.6"><path d="M1.6 0.4 H6.6 L8.9 2.2 V7.4 Q8.9 8.2 8.1 8.2 H6.6 L6 7.3 H3.4 L2.8 8.2 H1.3 Q0.5 8.2 0.5 7.4 V1.5 Q0.5 0.4 1.6 0.4 Z" fill="#74e074" stroke="#4cc04c" stroke-width="0.5"/><path d="M2 5.6 L4 3 L5.4 4.6 L7.4 4.4" fill="none" stroke="#0f6a0f" stroke-width="0.9"/></svg>
<div class="t" style="top:219.2px;height:10.43px;line-height:10.43px;font-size:7.45px;color:#1a1a1a;white-space:nowrap;left:445px;letter-spacing:-0.1px;-webkit-text-stroke:0.1px #1a1a1a;">StealthMode</div>
<div class="t" style="top:219.2px;height:10.43px;line-height:10.43px;font-size:7.45px;color:#1a1a1a;white-space:nowrap;left:581px;letter-spacing:-0.06px;-webkit-text-stroke:0.1px #1a1a1a;">false</div>
<svg style="left:433.8px;top:231.58px;width:9.4px;height:8.6px" viewBox="0 0 9.4 8.6"><path d="M1.6 0.4 H6.6 L8.9 2.2 V7.4 Q8.9 8.2 8.1 8.2 H6.6 L6 7.3 H3.4 L2.8 8.2 H1.3 Q0.5 8.2 0.5 7.4 V1.5 Q0.5 0.4 1.6 0.4 Z" fill="#74e074" stroke="#4cc04c" stroke-width="0.5"/><path d="M2 5.6 L4 3 L5.4 4.6 L7.4 4.4" fill="none" stroke="#0f6a0f" stroke-width="0.9"/></svg>
<div class="t" style="top:231.16px;height:10.43px;line-height:10.43px;font-size:7.45px;color:#1a1a1a;white-space:nowrap;left:445px;letter-spacing:-0.1px;-webkit-text-stroke:0.1px #1a1a1a;">NFA</div>
<div class="t" style="top:231.16px;height:10.43px;line-height:10.43px;font-size:7.45px;color:#1a1a1a;white-space:nowrap;left:581px;letter-spacing:-0.06px;-webkit-text-stroke:0.1px #1a1a1a;">false</div>
<div style="left:432.7px;top:241.75px;width:292.6px;height:11.65px;background:#ebebeb;"></div>
<svg style="left:433.8px;top:243.52px;width:9.4px;height:8.6px" viewBox="0 0 9.4 8.6"><path d="M1.6 0.4 H6.6 L8.9 2.2 V7.4 Q8.9 8.2 8.1 8.2 H6.6 L6 7.3 H3.4 L2.8 8.2 H1.3 Q0.5 8.2 0.5 7.4 V1.5 Q0.5 0.4 1.6 0.4 Z" fill="#74e074" stroke="#4cc04c" stroke-width="0.5"/><path d="M2 5.6 L4 3 L5.4 4.6 L7.4 4.4" fill="none" stroke="#0f6a0f" stroke-width="0.9"/></svg>
<div class="t" style="top:243.1px;height:10.43px;line-height:10.43px;font-size:7.45px;color:#1a1a1a;white-space:nowrap;left:445px;letter-spacing:-0.1px;-webkit-text-stroke:0.1px #1a1a1a;">No_Hedge</div>
<div class="t" style="top:243.1px;height:10.43px;line-height:10.43px;font-size:7.45px;color:#1a1a1a;white-space:nowrap;left:581px;letter-spacing:-0.06px;-webkit-text-stroke:0.1px #1a1a1a;">false</div>
<svg style="left:433.8px;top:255.48px;width:9.4px;height:8.6px" viewBox="0 0 9.4 8.6"><path d="M1.6 0.4 H6.6 L8.9 2.2 V7.4 Q8.9 8.2 8.1 8.2 H6.6 L6 7.3 H3.4 L2.8 8.2 H1.3 Q0.5 8.2 0.5 7.4 V1.5 Q0.5 0.4 1.6 0.4 Z" fill="#86bdf2" stroke="#5a94d4" stroke-width="0.5"/><text x="4.6" y="5.9" font-size="4.1" font-weight="bold" text-anchor="middle" fill="#1c3c78" font-family="Liberation Sans,sans-serif" letter-spacing="-0.3">123</text></svg>
<div class="t" style="top:255.06px;height:10.43px;line-height:10.43px;font-size:7.45px;color:#1a1a1a;white-space:nowrap;left:445px;letter-spacing:-0.1px;-webkit-text-stroke:0.1px #1a1a1a;">Max_Orders_Total</div>
<div class="t" style="top:255.06px;height:10.43px;line-height:10.43px;font-size:7.45px;color:#1a1a1a;white-space:nowrap;left:581px;letter-spacing:-0.06px;-webkit-text-stroke:0.1px #1a1a1a;">9</div>
<div style="left:432.7px;top:265.65px;width:292.6px;height:11.65px;background:#ebebeb;"></div>
<svg style="left:433.8px;top:267.43px;width:9.4px;height:8.6px" viewBox="0 0 9.4 8.6"><path d="M1.6 0.4 H6.6 L8.9 2.2 V7.4 Q8.9 8.2 8.1 8.2 H6.6 L6 7.3 H3.4 L2.8 8.2 H1.3 Q0.5 8.2 0.5 7.4 V1.5 Q0.5 0.4 1.6 0.4 Z" fill="#f3e27c" stroke="#cdb84a" stroke-width="0.5"/><text x="4.6" y="6.0" font-size="4.4" font-weight="bold" text-anchor="middle" fill="#6e6010" font-family="Liberation Sans,sans-serif">ab</text></svg>
<div class="t" style="top:267.02px;height:10.43px;line-height:10.43px;font-size:7.45px;color:#1a1a1a;white-space:nowrap;left:445px;letter-spacing:-0.1px;-webkit-text-stroke:0.1px #1a1a1a;">SS1</div>
<div class="t" style="top:267.02px;height:10.43px;line-height:10.43px;font-size:7.45px;color:#1a1a1a;white-space:nowrap;left:581px;letter-spacing:-0.06px;-webkit-text-stroke:0.1px #1a1a1a;"><span style="letter-spacing:0.72px">======</span> Signal 1 Settings <span style="letter-spacing:0.72px">=======</span></div>
<svg style="left:433.8px;top:279.38px;width:9.4px;height:8.6px" viewBox="0 0 9.4 8.6"><path d="M1.6 0.4 H6.6 L8.9 2.2 V7.4 Q8.9 8.2 8.1 8.2 H6.6 L6 7.3 H3.4 L2.8 8.2 H1.3 Q0.5 8.2 0.5 7.4 V1.5 Q0.5 0.4 1.6 0.4 Z" fill="#74e074" stroke="#4cc04c" stroke-width="0.5"/><path d="M2 5.6 L4 3 L5.4 4.6 L7.4 4.4" fill="none" stroke="#0f6a0f" stroke-width="0.9"/></svg>
<div class="t" style="top:278.97px;height:10.43px;line-height:10.43px;font-size:7.45px;color:#1a1a1a;white-space:nowrap;left:445px;letter-spacing:-0.1px;-webkit-text-stroke:0.1px #1a1a1a;">Signal_1</div>
<div class="t" style="top:278.97px;height:10.43px;line-height:10.43px;font-size:7.45px;color:#1a1a1a;white-space:nowrap;left:581px;letter-spacing:-0.06px;-webkit-text-stroke:0.1px #1a1a1a;">true</div>
<div style="left:432.7px;top:289.55px;width:292.6px;height:11.65px;background:#ebebeb;"></div>
<svg style="left:433.8px;top:291.32px;width:9.4px;height:8.6px" viewBox="0 0 9.4 8.6"><path d="M1.6 0.4 H6.6 L8.9 2.2 V7.4 Q8.9 8.2 8.1 8.2 H6.6 L6 7.3 H3.4 L2.8 8.2 H1.3 Q0.5 8.2 0.5 7.4 V1.5 Q0.5 0.4 1.6 0.4 Z" fill="#86bdf2" stroke="#5a94d4" stroke-width="0.5"/><text x="4.6" y="5.9" font-size="4.1" font-weight="bold" text-anchor="middle" fill="#1c3c78" font-family="Liberation Sans,sans-serif" letter-spacing="-0.3">123</text></svg>
<div class="t" style="top:290.91px;height:10.43px;line-height:10.43px;font-size:7.45px;color:#1a1a1a;white-space:nowrap;left:445px;letter-spacing:-0.1px;-webkit-text-stroke:0.1px #1a1a1a;">Magic_1</div>
<div class="t" style="top:290.91px;height:10.43px;line-height:10.43px;font-size:7.45px;color:#1a1a1a;white-space:nowrap;left:581px;letter-spacing:-0.06px;-webkit-text-stroke:0.1px #1a1a1a;">10101</div>
<svg style="left:433.8px;top:303.28px;width:9.4px;height:8.6px" viewBox="0 0 9.4 8.6"><path d="M1.6 0.4 H6.6 L8.9 2.2 V7.4 Q8.9 8.2 8.1 8.2 H6.6 L6 7.3 H3.4 L2.8 8.2 H1.3 Q0.5 8.2 0.5 7.4 V1.5 Q0.5 0.4 1.6 0.4 Z" fill="#74e074" stroke="#4cc04c" stroke-width="0.5"/><path d="M2 5.6 L4 3 L5.4 4.6 L7.4 4.4" fill="none" stroke="#0f6a0f" stroke-width="0.9"/></svg>
<div class="t" style="top:302.87px;height:10.43px;line-height:10.43px;font-size:7.45px;color:#1a1a1a;white-space:nowrap;left:445px;letter-spacing:-0.1px;-webkit-text-stroke:0.1px #1a1a1a;">RecoveryMode_1</div>
<div class="t" style="top:302.87px;height:10.43px;line-height:10.43px;font-size:7.45px;color:#1a1a1a;white-space:nowrap;left:581px;letter-spacing:-0.06px;-webkit-text-stroke:0.1px #1a1a1a;">false</div>
<div style="left:432.7px;top:313.45px;width:292.6px;height:11.65px;background:#ebebeb;"></div>
<svg style="left:433.8px;top:315.23px;width:9.4px;height:8.6px" viewBox="0 0 9.4 8.6"><path d="M1.6 0.4 H6.6 L8.9 2.2 V7.4 Q8.9 8.2 8.1 8.2 H6.6 L6 7.3 H3.4 L2.8 8.2 H1.3 Q0.5 8.2 0.5 7.4 V1.5 Q0.5 0.4 1.6 0.4 Z" fill="#a6e2f2" stroke="#6cbcd8" stroke-width="0.5"/><text x="4.6" y="5.9" font-size="4.4" font-weight="bold" text-anchor="middle" fill="#1c6a88" font-family="Liberation Sans,sans-serif">½</text></svg>
<div class="t" style="top:314.81px;height:10.43px;line-height:10.43px;font-size:7.45px;color:#1a1a1a;white-space:nowrap;left:445px;letter-spacing:-0.1px;-webkit-text-stroke:0.1px #1a1a1a;">FixedLots_1</div>
<div class="t" style="top:314.81px;height:10.43px;line-height:10.43px;font-size:7.45px;color:#1a1a1a;white-space:nowrap;left:581px;letter-spacing:-0.06px;-webkit-text-stroke:0.1px #1a1a1a;">0.1</div>
<svg style="left:433.8px;top:327.18px;width:9.4px;height:8.6px" viewBox="0 0 9.4 8.6"><path d="M1.6 0.4 H6.6 L8.9 2.2 V7.4 Q8.9 8.2 8.1 8.2 H6.6 L6 7.3 H3.4 L2.8 8.2 H1.3 Q0.5 8.2 0.5 7.4 V1.5 Q0.5 0.4 1.6 0.4 Z" fill="#a6e2f2" stroke="#6cbcd8" stroke-width="0.5"/><text x="4.6" y="5.9" font-size="4.4" font-weight="bold" text-anchor="middle" fill="#1c6a88" font-family="Liberation Sans,sans-serif">½</text></svg>
<div class="t" style="top:326.77px;height:10.43px;line-height:10.43px;font-size:7.45px;color:#1a1a1a;white-space:nowrap;left:445px;letter-spacing:-0.1px;-webkit-text-stroke:0.1px #1a1a1a;">AutoMM_1</div>
<div class="t" style="top:326.77px;height:10.43px;line-height:10.43px;font-size:7.45px;color:#1a1a1a;white-space:nowrap;left:581px;letter-spacing:-0.06px;-webkit-text-stroke:0.1px #1a1a1a;">0.0</div>
<div style="left:432.7px;top:337.35px;width:292.6px;height:11.65px;background:#ebebeb;"></div>
<svg style="left:433.8px;top:339.13px;width:9.4px;height:8.6px" viewBox="0 0 9.4 8.6"><path d="M1.6 0.4 H6.6 L8.9 2.2 V7.4 Q8.9 8.2 8.1 8.2 H6.6 L6 7.3 H3.4 L2.8 8.2 H1.3 Q0.5 8.2 0.5 7.4 V1.5 Q0.5 0.4 1.6 0.4 Z" fill="#a6e2f2" stroke="#6cbcd8" stroke-width="0.5"/><text x="4.6" y="5.9" font-size="4.4" font-weight="bold" text-anchor="middle" fill="#1c6a88" font-family="Liberation Sans,sans-serif">½</text></svg>
<div class="t" style="top:338.72px;height:10.43px;line-height:10.43px;font-size:7.45px;color:#1a1a1a;white-space:nowrap;left:445px;letter-spacing:-0.1px;-webkit-text-stroke:0.1px #1a1a1a;">AutoMM_Max_1</div>
<div class="t" style="top:338.72px;height:10.43px;line-height:10.43px;font-size:7.45px;color:#1a1a1a;white-space:nowrap;left:581px;letter-spacing:-0.06px;-webkit-text-stroke:0.1px #1a1a1a;">20.0</div>
<svg style="left:433.8px;top:351.08px;width:9.4px;height:8.6px" viewBox="0 0 9.4 8.6"><path d="M1.6 0.4 H6.6 L8.9 2.2 V7.4 Q8.9 8.2 8.1 8.2 H6.6 L6 7.3 H3.4 L2.8 8.2 H1.3 Q0.5 8.2 0.5 7.4 V1.5 Q0.5 0.4 1.6 0.4 Z" fill="#86bdf2" stroke="#5a94d4" stroke-width="0.5"/><text x="4.6" y="5.9" font-size="4.1" font-weight="bold" text-anchor="middle" fill="#1c3c78" font-family="Liberation Sans,sans-serif" letter-spacing="-0.3">123</text></svg>
<div class="t" style="top:350.67px;height:10.43px;line-height:10.43px;font-size:7.45px;color:#1a1a1a;white-space:nowrap;left:445px;letter-spacing:-0.1px;-webkit-text-stroke:0.1px #1a1a1a;">Max_Orders_1</div>
<div class="t" style="top:350.67px;height:10.43px;line-height:10.43px;font-size:7.45px;color:#1a1a1a;white-space:nowrap;left:581px;letter-spacing:-0.06px;-webkit-text-stroke:0.1px #1a1a1a;">3</div>
<div style="left:432.7px;top:361.25px;width:292.6px;height:11.65px;background:#ebebeb;"></div>
<svg style="left:433.8px;top:363.03px;width:9.4px;height:8.6px" viewBox="0 0 9.4 8.6"><path d="M1.6 0.4 H6.6 L8.9 2.2 V7.4 Q8.9 8.2 8.1 8.2 H6.6 L6 7.3 H3.4 L2.8 8.2 H1.3 Q0.5 8.2 0.5 7.4 V1.5 Q0.5 0.4 1.6 0.4 Z" fill="#86bdf2" stroke="#5a94d4" stroke-width="0.5"/><text x="4.6" y="5.9" font-size="4.1" font-weight="bold" text-anchor="middle" fill="#1c3c78" font-family="Liberation Sans,sans-serif" letter-spacing="-0.3">123</text></svg>
<div class="t" style="top:362.62px;height:10.43px;line-height:10.43px;font-size:7.45px;color:#1a1a1a;white-space:nowrap;left:445px;letter-spacing:-0.1px;-webkit-text-stroke:0.1px #1a1a1a;">Trade_Interval_1</div>
<div class="t" style="top:362.62px;height:10.43px;line-height:10.43px;font-size:7.45px;color:#1a1a1a;white-space:nowrap;left:581px;letter-spacing:-0.06px;-webkit-text-stroke:0.1px #1a1a1a;">15</div>
<svg style="left:433.8px;top:374.98px;width:9.4px;height:8.6px" viewBox="0 0 9.4 8.6"><path d="M1.6 0.4 H6.6 L8.9 2.2 V7.4 Q8.9 8.2 8.1 8.2 H6.6 L6 7.3 H3.4 L2.8 8.2 H1.3 Q0.5 8.2 0.5 7.4 V1.5 Q0.5 0.4 1.6 0.4 Z" fill="#f3e27c" stroke="#cdb84a" stroke-width="0.5"/><text x="4.6" y="6.0" font-size="4.4" font-weight="bold" text-anchor="middle" fill="#6e6010" font-family="Liberation Sans,sans-serif">ab</text></svg>
<div class="t" style="top:374.56px;height:10.43px;line-height:10.43px;font-size:7.45px;color:#1a1a1a;white-space:nowrap;left:445px;letter-spacing:-0.1px;-webkit-text-stroke:0.1px #1a1a1a;">SS2</div>
<div class="t" style="top:374.56px;height:10.43px;line-height:10.43px;font-size:7.45px;color:#1a1a1a;white-space:nowrap;left:581px;letter-spacing:-0.06px;-webkit-text-stroke:0.1px #1a1a1a;"><span style="letter-spacing:0.72px">======</span> Signal 2 Settings <span style="letter-spacing:0.72px">=======</span></div>
<div style="left:432.7px;top:385.15px;width:292.6px;height:11.65px;background:#ebebeb;"></div>
<svg style="left:433.8px;top:386.93px;width:9.4px;height:8.6px" viewBox="0 0 9.4 8.6"><path d="M1.6 0.4 H6.6 L8.9 2.2 V7.4 Q8.9 8.2 8.1 8.2 H6.6 L6 7.3 H3.4 L2.8 8.2 H1.3 Q0.5 8.2 0.5 7.4 V1.5 Q0.5 0.4 1.6 0.4 Z" fill="#74e074" stroke="#4cc04c" stroke-width="0.5"/><path d="M2 5.6 L4 3 L5.4 4.6 L7.4 4.4" fill="none" stroke="#0f6a0f" stroke-width="0.9"/></svg>
<div class="t" style="top:386.52px;height:10.43px;line-height:10.43px;font-size:7.45px;color:#1a1a1a;white-space:nowrap;left:445px;letter-spacing:-0.1px;-webkit-text-stroke:0.1px #1a1a1a;">Signal_2</div>
<div class="t" style="top:386.52px;height:10.43px;line-height:10.43px;font-size:7.45px;color:#1a1a1a;white-space:nowrap;left:581px;letter-spacing:-0.06px;-webkit-text-stroke:0.1px #1a1a1a;">true</div>
<div style="left:578.2px;top:120px;width:0.7px;height:277px;background:rgba(200,200,200,0.5);"></div>
<div style="left:725.3px;top:120.1px;width:9.8px;height:276.8px;background:#f1f1f1;"></div>
<div style="left:729.9px;top:130px;width:1px;height:94px;background:#7a7a7a;border-radius:0.5px;"></div>
<div style="left:741.4px;top:356.4px;width:68.2px;height:14.8px;background:#fdfdfd;border:0.7px solid #d4d4d4;border-radius:2.4px;"></div><div class="t" style="top:359.07px;height:9.66px;line-height:9.66px;font-size:6.9px;color:#111;white-space:nowrap;left:741.4px;width:68.2px;text-align:center;">加载(L)</div>
<div style="left:741.4px;top:380.9px;width:68.2px;height:14.8px;background:#fdfdfd;border:0.7px solid #d4d4d4;border-radius:2.4px;"></div><div class="t" style="top:383.57px;height:9.66px;line-height:9.66px;font-size:6.9px;color:#111;white-space:nowrap;left:741.4px;width:68.2px;text-align:center;">保存(S)</div>
<div style="left:658.4px;top:401.8px;width:47.8px;height:14.5px;background:#fdfdfd;border:0.7px solid #d4d4d4;border-radius:2.4px;"></div><div class="t" style="top:404.32px;height:9.66px;line-height:9.66px;font-size:6.9px;color:#111;white-space:nowrap;left:658.4px;width:47.8px;text-align:center;">确定</div>
<div style="left:711.8px;top:401.8px;width:48.1px;height:14.5px;background:#fdfdfd;border:0.7px solid #d4d4d4;border-radius:2.4px;"></div><div class="t" style="top:404.32px;height:9.66px;line-height:9.66px;font-size:6.9px;color:#111;white-space:nowrap;left:711.8px;width:48.1px;text-align:center;">取消</div>
<div style="left:765.4px;top:401.8px;width:47.8px;height:14.5px;background:#fdfdfd;border:0.7px solid #d4d4d4;border-radius:2.4px;"></div><div class="t" style="top:404.32px;height:9.66px;line-height:9.66px;font-size:6.9px;color:#111;white-space:nowrap;left:765.4px;width:47.8px;text-align:center;">重设</div>
<svg style="left:811px;top:413.4px;width:6px;height:6px" viewBox="0 0 6 6"><g fill="#b0b0b0"><rect x="4.2" y="0.6" width="1" height="1"/><rect x="4.2" y="2.4" width="1" height="1"/><rect x="2.4" y="2.4" width="1" height="1"/><rect x="4.2" y="4.2" width="1" height="1"/><rect x="2.4" y="4.2" width="1" height="1"/><rect x="0.6" y="4.2" width="1" height="1"/></g></svg>
<svg style="left:458px;top:466px;width:42px;height:36px" viewBox="458 466 42 36"><path d="M471.6 468.7 H489.4 Q490.7 468.7 491.2 469.9 L496.7 483.2 Q497.4 485.1 495.4 485.2 H477.6 Q476.3 485.2 475.8 484 L470.3 470.6 Q469.6 468.8 471.6 468.7 Z" fill="#1257e6"/><path d="M465.5 474.3 L467.9 473.3 L474.2 488 Q474.6 488.8 475.5 488.8 H494.3 L491.9 491.6 Q491.5 492 490.9 492 H473.4 Q472.3 492 471.8 490.9 L465.3 475.6 Q465 474.7 465.5 474.3 Z" fill="#1257e6"/><path d="M461.3 480 L463.3 478.8 L469.6 493.8 Q470 494.6 470.9 494.6 H488.9 L486.5 497.5 Q486.1 497.9 485.5 497.9 H469.6 Q468.5 497.9 468 496.8 L461.1 481.2 Q460.8 480.4 461.3 480 Z" fill="#1257e6"/></svg>
<div class="t" style="top:462.2px;height:30px;line-height:30px;font-size:23.85px;color:#1257e6;white-space:nowrap;left:514.9px;font-weight:900;transform:scaleY(0.885);transform-origin:50% 50%;">精</div>
<div class="t" style="top:462.2px;height:30px;line-height:30px;font-size:23.85px;color:#1257e6;white-space:nowrap;left:542.5px;font-weight:900;transform:scaleY(0.885);transform-origin:50% 50%;">品</div>
<div class="t" style="top:462.3px;height:30px;line-height:30px;font-size:22.8px;color:#1257e6;white-space:nowrap;left:569.2px;font-weight:bold;letter-spacing:1.1px;-webkit-text-stroke:0.35px #1257e6;">EA</div>
<div class="t" style="top:488.6px;height:18px;line-height:18px;font-size:13.6px;color:#1257e6;white-space:nowrap;left:502.6px;font-weight:bold;letter-spacing:0.4px;">eaclubshare.com</div>
</div></body></html>
